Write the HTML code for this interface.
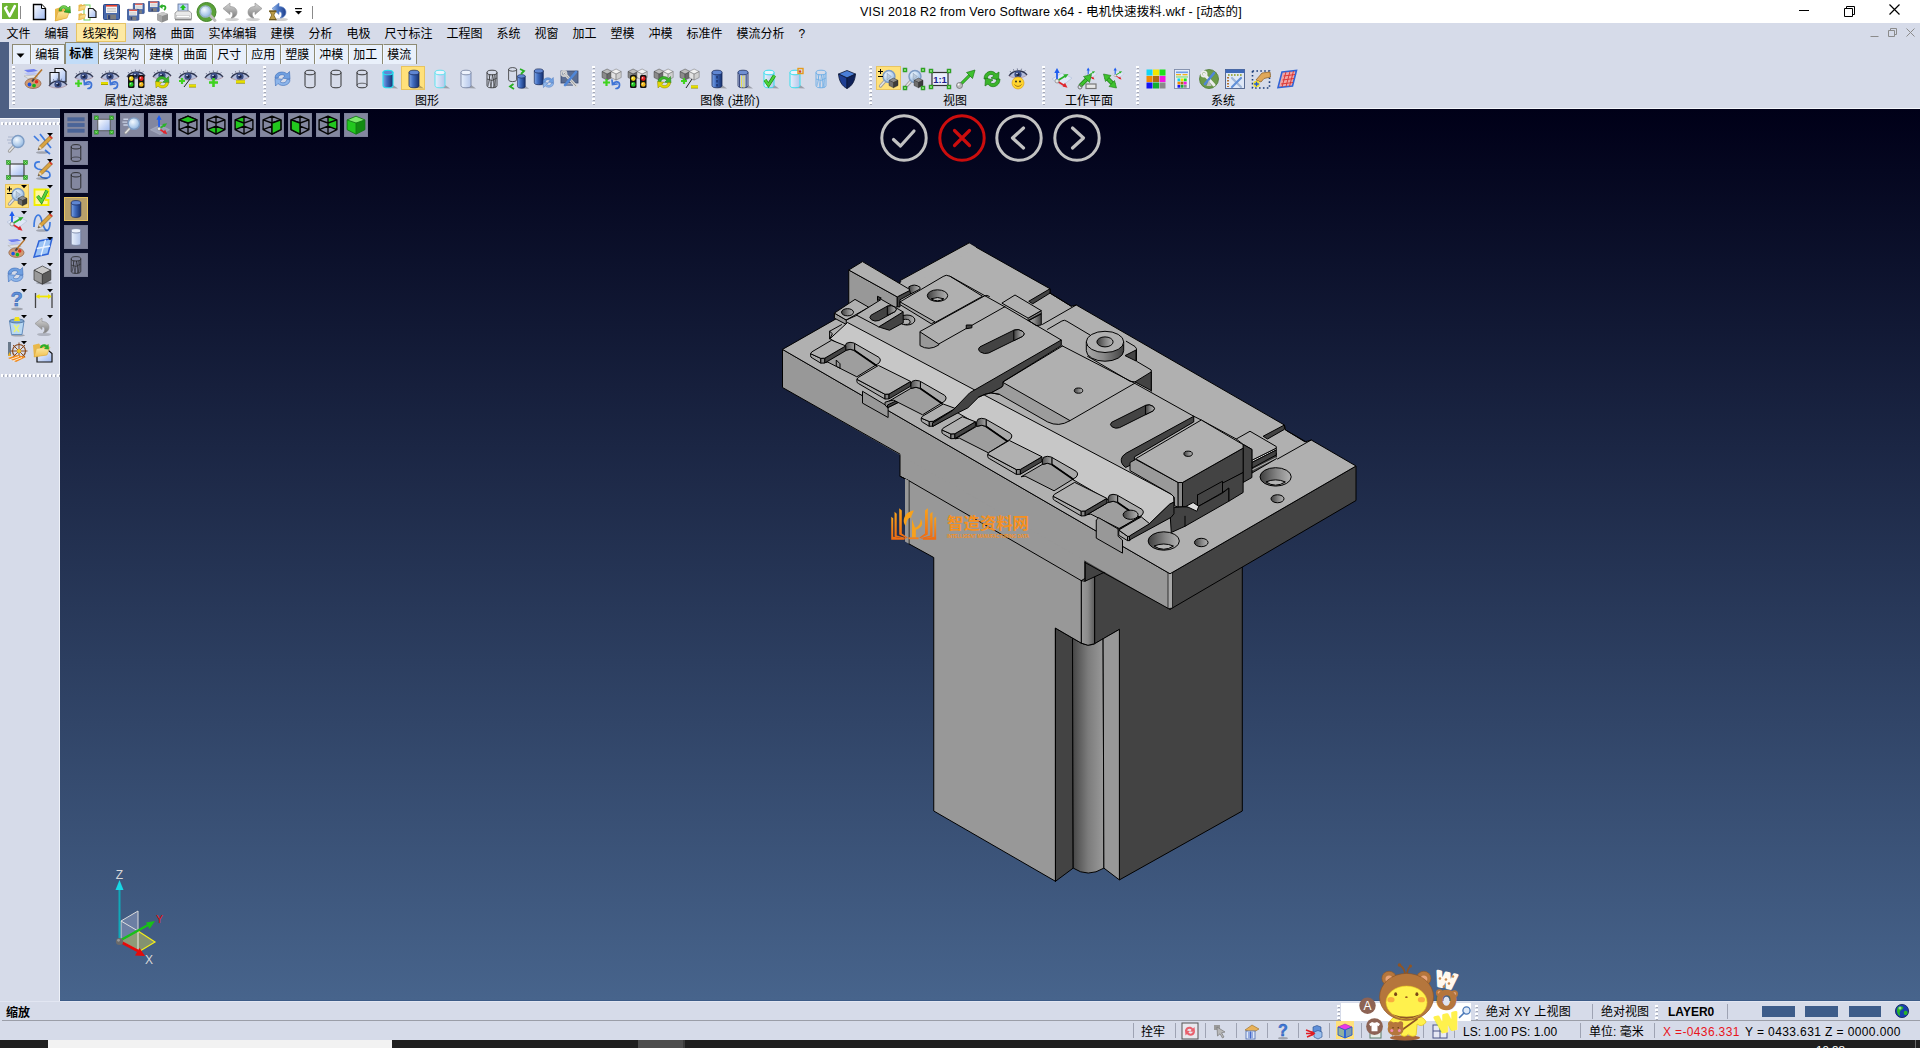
<!DOCTYPE html>
<html lang="zh-CN">
<head>
<meta charset="utf-8">
<title>VISI 2018 R2 from Vero Software x64 - 电机快速拨料.wkf - [动态的]</title>
<style>
*{box-sizing:border-box;margin:0;padding:0}
html,body{width:1920px;height:1048px;overflow:hidden;background:#d6dbe9}
body{font-family:"Liberation Sans","Noto Sans CJK SC",sans-serif;font-size:12px;color:#000;position:relative}
.abs{position:absolute}
#titlebar{position:absolute;left:0;top:0;width:1920px;height:23px;background:#fff}
#title{position:absolute;left:860px;top:4px;width:382px;height:16px;line-height:16px;font-size:12.5px;white-space:nowrap;color:#000;letter-spacing:0.17px}
#menubar{position:absolute;left:0;top:23px;width:1920px;height:20px;background:#d6dbe9}
.mi{position:absolute;top:0;height:19px;line-height:19px;font-size:12px;white-space:nowrap;color:#000}
.mi.sel{background:#fde9a4;border:1px solid #e5c365;}
#tabs{position:absolute;left:0;top:42px;width:1920px;height:22px}
.tab{position:absolute;top:2px;height:20px;line-height:20px;font-size:12px;text-align:center;text-indent:-1.5px;background:#e9f0fb;border:1px solid #8d8a73;border-bottom:none;border-right:1px solid #8d8a73;border-left:1px solid #f4f8fe;color:#000;white-space:nowrap}
.tab.sel{top:0;height:22px;line-height:22px;background:#c1dcf8;font-weight:bold;border-left:1px solid #8d8a73}
#ribbon{position:absolute;left:9px;top:64px;width:1911px;height:45px;background:#d6dbe9;border-bottom:1px solid #f4f6fb}
.grip-v{position:absolute;width:3px;background-image:repeating-linear-gradient(to bottom,#fff 0,#fff 2px,transparent 2px,transparent 4px);}
.grip-v:after{content:"";position:absolute;left:1px;top:1px;width:2px;height:100%;background-image:repeating-linear-gradient(to bottom,#9aa 0,#9aa 0,transparent 0,transparent 1px,#a5a8b5 1px,#a5a8b5 2px,transparent 2px,transparent 4px)}
.glabel{position:absolute;top:94px;height:15px;line-height:15px;font-size:12px;white-space:nowrap;transform:translateX(-50%);color:#000}
.ico{position:absolute;width:24px;height:24px;overflow:visible}
.hl{position:absolute;background:#ffe17a;border:1px solid #e8c460}
#leftstrip{position:absolute;left:0;top:42px;width:9px;height:76px;background:#4d5f83}
#leftband{position:absolute;left:0;top:109px;width:60px;height:9px;background:#4d5f83}
#sidebar{position:absolute;left:0;top:118px;width:60px;height:883px;background:#d6dbe9;border-top:1px solid #f4f6fb;border-right:1px solid #eef1f8}
.grip-h{position:absolute;height:3px;background-image:repeating-linear-gradient(to right,#fff 0,#fff 2px,transparent 2px,transparent 4px)}
.grip-h:after{content:"";position:absolute;left:1px;top:1px;height:2px;width:100%;background-image:repeating-linear-gradient(to right,transparent 0,transparent 1px,#a5a8b5 1px,#a5a8b5 2px,transparent 2px,transparent 4px)}
#viewport{position:absolute;left:60px;top:109px;width:1860px;height:892px;overflow:hidden;background:linear-gradient(to bottom,#000018 0%,#47648c 100%);border-bottom:1px solid #3c5b87}
.vbtn{position:absolute;width:24px;height:24px;background:#83879f;border:1px solid #7b7f98}
.vbtn.sel{background:#b8a06a;border:1px solid #e8c460}
#status{position:absolute;left:0;top:1001px;width:1920px;height:39px;background:#d6dbe9;border-top:1px solid #e2e6f2}
#status .ln{position:absolute;left:2px;top:18px;width:1918px;height:1px;background:#9b9ea8}
.st{position:absolute;white-space:nowrap;font-size:12px;line-height:16px;height:16px;color:#000}
.sep{position:absolute;width:1px;height:15px;background:#9ea3b3}
#taskbar{position:absolute;left:0;top:1040px;width:1920px;height:8px;background:#1f1f1f;overflow:hidden}
</style>
</head>
<body>
<div id="titlebar">
<svg width="0" height="0" style="position:absolute"><defs>
<linearGradient id="gDoc" x1="0" y1="0" x2="1" y2="1"><stop offset="0" stop-color="#fff"/><stop offset="1" stop-color="#9db8f0"/></linearGradient>
<linearGradient id="gFold" x1="0" y1="0" x2="0" y2="1"><stop offset="0" stop-color="#fbe9a8"/><stop offset="1" stop-color="#f2c14e"/></linearGradient>
<linearGradient id="gBlue" x1="0" y1="0" x2="1" y2="0"><stop offset="0" stop-color="#9dbbe8"/><stop offset="0.45" stop-color="#4a76c4"/><stop offset="1" stop-color="#1e3f8c"/></linearGradient>
<linearGradient id="gCyl" x1="0" y1="0" x2="1" y2="0"><stop offset="0" stop-color="#7fa6e6"/><stop offset="0.4" stop-color="#3f6cc0"/><stop offset="1" stop-color="#16306e"/></linearGradient>
<linearGradient id="gCylL" x1="0" y1="0" x2="1" y2="0"><stop offset="0" stop-color="#e8f0fc"/><stop offset="1" stop-color="#b4c6ea"/></linearGradient>
<linearGradient id="gGrey" x1="0" y1="0" x2="0" y2="1"><stop offset="0" stop-color="#d8d8d8"/><stop offset="1" stop-color="#7c7c7c"/></linearGradient>
<linearGradient id="gGreen" x1="0" y1="0" x2="0" y2="1"><stop offset="0" stop-color="#8be05a"/><stop offset="1" stop-color="#1f9a1a"/></linearGradient>
<radialGradient id="gLens" cx="0.4" cy="0.35" r="0.7"><stop offset="0" stop-color="#f4faff"/><stop offset="1" stop-color="#8db4e0"/></radialGradient>
<linearGradient id="gEye" x1="0" y1="0" x2="0" y2="1"><stop offset="0" stop-color="#3d4c78"/><stop offset="1" stop-color="#a9b7dc"/></linearGradient>
</defs></svg>
<svg class="abs" style="left:2px;top:3px" width="17" height="17" viewBox="0 0 17 17"><rect x="0" y="0" width="16" height="16" fill="#6db533"/><path d="M3.2 5.2 L7.6 13.2 L12.8 3.2" fill="none" stroke="#fff" stroke-width="2.6" stroke-linejoin="round" stroke-linecap="round"/><circle cx="4.6" cy="3.8" r="1.1" fill="#fff"/></svg>
<div class="abs" style="left:20px;top:6px;width:1px;height:13px;background:#8a8a8a"></div>
<svg class="abs" style="left:32px;top:3px" width="16" height="18" viewBox="0 0 16 18"><path d="M1.5 1.5 H9.5 L13.5 5.5 V16.5 H1.5 Z" fill="url(#gDoc)" stroke="#000" stroke-width="1.4"/><path d="M9.5 1.5 V5.5 H13.5" fill="#fff" stroke="#000" stroke-width="1"/></svg>
<svg class="abs" style="left:54px;top:2px" width="20" height="20" viewBox="0 0 20 20"><g transform="translate(0,1) scale(1)"><path d="M1 6 L7 4 L8 6 L14 5 L13 15 L1 18 Z" fill="#e9b84a"/><path d="M1 18 L4 9 L16 7 L13 15 Z" fill="url(#gFold)" stroke="#d9a53a" stroke-width="0.6"/></g><path d="M5 9 C5 3 12 2 14 6 L16 4 L16.5 11 L10 10 L12 8 C10 5 7 6 7.5 9 Z" fill="url(#gGreen)" stroke="#1d7d16" stroke-width="0.5"/></svg>
<svg class="abs" style="left:78px;top:2px" width="20" height="20" viewBox="0 0 20 20"><rect x="6" y="3" width="6" height="15" fill="none" stroke="#6fd05a" stroke-width="1"/><g transform="translate(0,0) scale(0.5)"><path d="M1 6 L7 4 L8 6 L14 5 L13 15 L1 18 Z" fill="#e9b84a"/><path d="M1 18 L4 9 L16 7 L13 15 Z" fill="url(#gFold)" stroke="#d9a53a" stroke-width="0.6"/></g><g transform="translate(0,9) scale(0.5)"><path d="M1 6 L7 4 L8 6 L14 5 L13 15 L1 18 Z" fill="#e9b84a"/><path d="M1 18 L4 9 L16 7 L13 15 Z" fill="url(#gFold)" stroke="#d9a53a" stroke-width="0.6"/></g><path d="M10.5 6.5 H15 L18 9.5 V15.5 H10.5 Z" fill="url(#gDoc)" stroke="#222" stroke-width="1.2"/></svg>
<svg class="abs" style="left:103px;top:4px" width="18" height="17" viewBox="0 0 18 17"><g transform="translate(0,0) scale(1)"><rect x="0.5" y="0.5" width="16" height="15" rx="1" fill="#4668ac" stroke="#2c4784" stroke-width="1"/><rect x="3" y="1" width="11" height="8" fill="#f3f3f3"/><rect x="3" y="1" width="11" height="1.6" fill="#e2402f"/><path d="M4 4.5 H13 M4 6 H13 M4 7.5 H13" stroke="#b8b8b8" stroke-width="0.7"/><rect x="4" y="10.5" width="9" height="5" fill="#7d7d7d"/><rect x="5" y="11.2" width="2.2" height="3.8" fill="#2b3f77"/></g></svg>
<svg class="abs" style="left:127px;top:3px" width="19" height="19" viewBox="0 0 19 19"><g transform="translate(6,0) scale(0.68)"><rect x="0.5" y="0.5" width="16" height="15" rx="1" fill="#4668ac" stroke="#2c4784" stroke-width="1"/><rect x="3" y="1" width="11" height="8" fill="#f3f3f3"/><rect x="3" y="1" width="11" height="1.6" fill="#e2402f"/><path d="M4 4.5 H13 M4 6 H13 M4 7.5 H13" stroke="#b8b8b8" stroke-width="0.7"/><rect x="4" y="10.5" width="9" height="5" fill="#7d7d7d"/><rect x="5" y="11.2" width="2.2" height="3.8" fill="#2b3f77"/></g><g transform="translate(0,6) scale(0.72)"><rect x="0.5" y="0.5" width="16" height="15" rx="1" fill="#4668ac" stroke="#2c4784" stroke-width="1"/><rect x="3" y="1" width="11" height="8" fill="#f3f3f3"/><rect x="3" y="1" width="11" height="1.6" fill="#e2402f"/><path d="M4 4.5 H13 M4 6 H13 M4 7.5 H13" stroke="#b8b8b8" stroke-width="0.7"/><rect x="4" y="10.5" width="9" height="5" fill="#7d7d7d"/><rect x="5" y="11.2" width="2.2" height="3.8" fill="#2b3f77"/></g></svg>
<svg class="abs" style="left:148px;top:1px" width="22" height="22" viewBox="0 0 22 22"><g transform="translate(0,0) scale(0.68)"><rect x="0.5" y="0.5" width="16" height="15" rx="1" fill="#4668ac" stroke="#2c4784" stroke-width="1"/><rect x="3" y="1" width="11" height="8" fill="#f3f3f3"/><rect x="3" y="1" width="11" height="1.6" fill="#e2402f"/><path d="M4 4.5 H13 M4 6 H13 M4 7.5 H13" stroke="#b8b8b8" stroke-width="0.7"/><rect x="4" y="10.5" width="9" height="5" fill="#7d7d7d"/><rect x="5" y="11.2" width="2.2" height="3.8" fill="#2b3f77"/></g><path d="M13 6 C17 3 19 7 16 9" fill="none" stroke="#2cae2a" stroke-width="1.8"/><path d="M11 5.5 L14.5 3 L14.5 8 Z" fill="#2cae2a"/><path d="M9 13 L15 11 L20 13 L20 19 L14 21.5 L9 19 Z" fill="#8d8d8d"/><path d="M9 13 L14 15 L20 13 L15 11 Z" fill="#c9c9c9"/><path d="M14 15 V21.5 L9 19 V13 Z" fill="#a6a6a6"/></svg>
<svg class="abs" style="left:174px;top:2px" width="20" height="20" viewBox="0 0 20 20"><rect x="4" y="2" width="10" height="9" fill="#b9d1f6" stroke="#5d6f96" stroke-width="0.8"/><path d="M9 2.5 L12 6 H10.3 V8 H7.7 V6 H6 Z" fill="#25c01f"/><path d="M1 11 L3.5 9 H15 L17.5 11 V17 H1 Z" fill="#e9e9e9" stroke="#8c8c8c" stroke-width="0.8"/><rect x="2.5" y="13.5" width="13" height="2" fill="#fff" stroke="#aaa" stroke-width="0.4"/><rect x="1" y="17" width="16.5" height="1.4" fill="#8a8a8a"/></svg>
<svg class="abs" style="left:196px;top:1px" width="22" height="22" viewBox="0 0 22 22"><circle cx="10.5" cy="11" r="9.5" fill="#5aa138"/><circle cx="10.5" cy="11" r="9.5" fill="none" stroke="#44852a" stroke-width="1"/><path d="M13 13 L19 19.5" stroke="#bdbdbd" stroke-width="3" stroke-linecap="round"/><circle cx="9.5" cy="10.5" r="5.6" fill="url(#gLens)" stroke="#9ab4c9" stroke-width="1.4"/></svg>
<svg class="abs" style="left:222px;top:2px" width="20" height="20" viewBox="0 0 20 20"><g transform="translate(0,0)"><ellipse cx="10" cy="17.5" rx="7" ry="1.6" fill="#000" opacity="0.18"/><path d="M1 6.5 L8 1 V4.5 C14 4.5 16 9 14.5 12.5 C13.5 15 11 16 9 16 C11.5 14 11.5 9.5 8 9.5 V12.5 Z" fill="url(#gGrey)" stroke="#8f8f8f" stroke-width="0.6"/></g></svg>
<svg class="abs" style="left:245px;top:2px" width="20" height="20" viewBox="0 0 20 20"><g transform="translate(0,0) translate(18,0) scale(-1,1)"><ellipse cx="10" cy="17.5" rx="7" ry="1.6" fill="#000" opacity="0.18"/><path d="M1 6.5 L8 1 V4.5 C14 4.5 16 9 14.5 12.5 C13.5 15 11 16 9 16 C11.5 14 11.5 9.5 8 9.5 V12.5 Z" fill="url(#gGrey)" stroke="#8f8f8f" stroke-width="0.6"/></g></svg>
<svg class="abs" style="left:268px;top:2px" width="22" height="20" viewBox="0 0 22 20"><g transform="translate(3,0)"><ellipse cx="10" cy="17.5" rx="7" ry="1.6" fill="#000" opacity="0.18"/><path d="M1 6.5 L8 1 V4.5 C14 4.5 16 9 14.5 12.5 C13.5 15 11 16 9 16 C11.5 14 11.5 9.5 8 9.5 V12.5 Z" fill="url(#gBlue)" stroke="#5a80c4" stroke-width="0.6"/></g><path d="M1.5 9 H8 L5.8 13 L8 17.5 H1.5 L3.7 13 Z" fill="#b99a45" stroke="#7a6320" stroke-width="0.8"/><rect x="1" y="8.5" width="7.5" height="1.3" fill="#6e5a1f"/><rect x="1" y="17" width="7.5" height="1.3" fill="#6e5a1f"/></svg>
<svg class="abs" style="left:294px;top:7px" width="10" height="10" viewBox="0 0 10 10"><rect x="1" y="1" width="7" height="1.2" fill="#000"/><path d="M1 4 H8 L4.5 7.5 Z" fill="#000"/></svg>
<div class="abs" style="left:312px;top:6px;width:1px;height:13px;background:#8a8a8a"></div>
<div id="title">VISI 2018 R2 from Vero Software x64 - 电机快速拨料.wkf - [动态的]</div>
<svg class="abs" style="left:1795px;top:1px" width="120" height="20" viewBox="0 0 120 20"><path d="M4 9.5 H14" stroke="#000" stroke-width="1"/><path d="M49.5 7.5 H57.5 V15.5 H49.5 Z M51.5 7.5 V5.5 H59.5 V13.5 H57.5" fill="none" stroke="#000" stroke-width="1"/><path d="M94.5 3.5 L104.5 13.5 M104.5 3.5 L94.5 13.5" stroke="#000" stroke-width="1.2"/></svg>
</div>
<div id="menubar">
<div class="mi" style="left:6.5px;top:2px">文件</div>
<div class="mi" style="left:44.5px;top:2px">编辑</div>
<div class="mi sel" style="left:76px;width:50px;top:0;height:19px;line-height:21px;padding-left:5.5px">线架构</div>
<div class="mi" style="left:132.5px;top:2px">网格</div>
<div class="mi" style="left:170.5px;top:2px">曲面</div>
<div class="mi" style="left:208.5px;top:2px">实体编辑</div>
<div class="mi" style="left:270.5px;top:2px">建模</div>
<div class="mi" style="left:308.5px;top:2px">分析</div>
<div class="mi" style="left:346.5px;top:2px">电极</div>
<div class="mi" style="left:384.5px;top:2px">尺寸标注</div>
<div class="mi" style="left:446.5px;top:2px">工程图</div>
<div class="mi" style="left:496.5px;top:2px">系统</div>
<div class="mi" style="left:534.5px;top:2px">视窗</div>
<div class="mi" style="left:572.5px;top:2px">加工</div>
<div class="mi" style="left:610.5px;top:2px">塑模</div>
<div class="mi" style="left:648.5px;top:2px">冲模</div>
<div class="mi" style="left:686.5px;top:2px">标准件</div>
<div class="mi" style="left:736.5px;top:2px">模流分析</div>
<div class="mi" style="left:798.5px;top:2px">?</div>
<svg class="abs" style="left:1866px;top:3px" width="50" height="14" viewBox="0 0 50 14"><path d="M4.5 10.5 H12.5" stroke="#8b8b8b" stroke-width="1"/><path d="M22.5 4.5 H28.5 V10.5 H22.5 Z M24.5 4.5 V2.5 H30.5 V8.5 H28.5" fill="none" stroke="#8b8b8b" stroke-width="1"/><path d="M40.5 2.5 L48.5 10.5 M48.5 2.5 L40.5 10.5" stroke="#8b8b8b" stroke-width="1"/></svg>
</div>
<div id="leftstrip"></div><div id="leftband"></div>
<div id="tabs">
<div class="tab" style="left:12px;width:19px;border-left:1px solid #8d8a73"><svg width="10" height="6" viewBox="0 0 10 6" style="position:absolute;left:3px;top:8px"><path d="M0.5 0.5 H8.5 L4.5 4.8 Z" fill="#000"/></svg></div>
<div class="tab" style="left:31px;width:34px">编辑</div>
<div class="tab sel" style="left:65px;width:34px">标准</div>
<div class="tab" style="left:99px;width:46px">线架构</div>
<div class="tab" style="left:145px;width:34px">建模</div>
<div class="tab" style="left:179px;width:34px">曲面</div>
<div class="tab" style="left:213px;width:34px">尺寸</div>
<div class="tab" style="left:247px;width:34px">应用</div>
<div class="tab" style="left:281px;width:34px">塑膜</div>
<div class="tab" style="left:315px;width:34px">冲模</div>
<div class="tab" style="left:349px;width:34px">加工</div>
<div class="tab" style="left:383px;width:34px">模流</div>
</div>
<div id="ribbon"></div>
<div class="grip-v" style="left:12px;top:66px;height:40px"></div>
<div class="grip-v" style="left:263px;top:66px;height:40px"></div>
<div class="grip-v" style="left:592px;top:66px;height:40px"></div>
<div class="grip-v" style="left:869px;top:66px;height:40px"></div>
<div class="grip-v" style="left:1042px;top:66px;height:40px"></div>
<div class="grip-v" style="left:1136px;top:66px;height:40px"></div>
<div class="glabel" style="left:136px">属性/过滤器</div>
<div class="glabel" style="left:427px">图形</div>
<div class="glabel" style="left:730px">图像 (进阶)</div>
<div class="glabel" style="left:955px">视图</div>
<div class="glabel" style="left:1089px">工作平面</div>
<div class="glabel" style="left:1223px">系统</div>
<div class="hl" style="left:401px;top:66px;width:24px;height:24px"></div>
<div class="hl" style="left:876px;top:66px;width:25px;height:24px"></div>
<svg class="ico" style="left:21px;top:67px" viewBox="0 0 24 24"><path d="M3 3 L13 2 L17 4 L7 5.5 Z" fill="#6f7ff0"/><path d="M3 6 L13 5 L17 7 L7 8.5 Z" fill="#b9c3f5"/><path d="M3 9 L13 8 L17 10 L7 11.5 Z" fill="#e4e4e4" stroke="#999" stroke-width="0.4"/><ellipse cx="12" cy="16.5" rx="8" ry="5" fill="#d09a72" stroke="#8a5a3c" stroke-width="0.7"/><circle cx="8.5" cy="17.5" r="1.9" fill="#1b53e6"/><circle cx="13" cy="18.6" r="1.9" fill="#16b61c"/><circle cx="15.5" cy="14.8" r="1.8" fill="#e02a1e"/><path d="M12 13 L21 2.5" stroke="#b5742b" stroke-width="1.6"/><path d="M11 14.5 L13 12" stroke="#444" stroke-width="2"/></svg>
<svg class="ico" style="left:46px;top:67px" viewBox="0 0 24 24"><path d="M9 1.5 H17 L20 4.5 V15 H9 Z" fill="url(#gDoc)" stroke="#111" stroke-width="1.1"/><path d="M4 5.5 H13 V17 H4 Z" fill="url(#gDoc)" stroke="#111" stroke-width="1.1"/><g transform="translate(2,11) scale(1.0)"><path d="M1 8 C5 1.5 15 1.5 19 7 C15 10.5 6 11 1 8 Z" fill="#b4bedc"/><path d="M1 8 C5 1.5 15 1.5 19 7" fill="none" stroke="#2d3550" stroke-width="1.3"/><path d="M3 4.5 L2 3 M6 2.8 L5.4 1.2 M9.5 2 L9.3 0.4 M13 2.2 L13.6 0.7 M16.2 3.6 L17.4 2.3" stroke="#3a4263" stroke-width="0.6"/><circle cx="10" cy="6.5" r="3.6" fill="#3c4f86"/><circle cx="10" cy="6.5" r="1.6" fill="#1a2240"/><circle cx="9" cy="5.5" r="0.8" fill="#dfe8ff"/><path d="M1 8 C6 11 15 10.5 19 7" fill="none" stroke="#b08f98" stroke-width="0.7"/></g></svg>
<svg class="ico" style="left:72px;top:67px" viewBox="0 0 24 24"><g transform="translate(2,3) scale(1)"><path d="M1 8 C5 1.5 15 1.5 19 7 C15 10.5 6 11 1 8 Z" fill="#b4bedc"/><path d="M1 8 C5 1.5 15 1.5 19 7" fill="none" stroke="#2d3550" stroke-width="1.3"/><path d="M3 4.5 L2 3 M6 2.8 L5.4 1.2 M9.5 2 L9.3 0.4 M13 2.2 L13.6 0.7 M16.2 3.6 L17.4 2.3" stroke="#3a4263" stroke-width="0.6"/><circle cx="10" cy="6.5" r="3.6" fill="#3c4f86"/><circle cx="10" cy="6.5" r="1.6" fill="#1a2240"/><circle cx="9" cy="5.5" r="0.8" fill="#dfe8ff"/><path d="M1 8 C6 11 15 10.5 19 7" fill="none" stroke="#b08f98" stroke-width="0.7"/></g><path d="M3 16.5 H10 M6.5 13 V20" stroke="#3fd21f" stroke-width="2.2"/><g transform="translate(11,12)"><path d="M1 1 L1.5 5.5 L6 5 M1.8 5 C4 1.5 9 2.5 8.5 6.5 C8.2 8.5 6.5 9.5 5 9.5" fill="none" stroke="#3f74d6" stroke-width="1.7" stroke-linecap="round"/></g></svg>
<svg class="ico" style="left:98px;top:67px" viewBox="0 0 24 24"><g transform="translate(2,3) scale(1)"><path d="M1 8 C5 1.5 15 1.5 19 7 C15 10.5 6 11 1 8 Z" fill="#b4bedc"/><path d="M1 8 C5 1.5 15 1.5 19 7" fill="none" stroke="#2d3550" stroke-width="1.3"/><path d="M3 4.5 L2 3 M6 2.8 L5.4 1.2 M9.5 2 L9.3 0.4 M13 2.2 L13.6 0.7 M16.2 3.6 L17.4 2.3" stroke="#3a4263" stroke-width="0.6"/><circle cx="10" cy="6.5" r="3.6" fill="#3c4f86"/><circle cx="10" cy="6.5" r="1.6" fill="#1a2240"/><circle cx="9" cy="5.5" r="0.8" fill="#dfe8ff"/><path d="M1 8 C6 11 15 10.5 19 7" fill="none" stroke="#b08f98" stroke-width="0.7"/></g><path d="M3 16.5 H10" stroke="#8f8a00" stroke-width="3.0"/><path d="M3 16.2 H10" stroke="#e8e000" stroke-width="2.2"/><g transform="translate(11,12)"><path d="M1 1 L1.5 5.5 L6 5 M1.8 5 C4 1.5 9 2.5 8.5 6.5 C8.2 8.5 6.5 9.5 5 9.5" fill="none" stroke="#3f74d6" stroke-width="1.7" stroke-linecap="round"/></g></svg>
<svg class="ico" style="left:124px;top:67px" viewBox="0 0 24 24"><g transform="translate(2,2) scale(1)"><path d="M1 8 C5 1.5 15 1.5 19 7 C15 10.5 6 11 1 8 Z" fill="#b4bedc"/><path d="M1 8 C5 1.5 15 1.5 19 7" fill="none" stroke="#2d3550" stroke-width="1.3"/><path d="M3 4.5 L2 3 M6 2.8 L5.4 1.2 M9.5 2 L9.3 0.4 M13 2.2 L13.6 0.7 M16.2 3.6 L17.4 2.3" stroke="#3a4263" stroke-width="0.6"/><circle cx="10" cy="6.5" r="3.6" fill="#3c4f86"/><circle cx="10" cy="6.5" r="1.6" fill="#1a2240"/><circle cx="9" cy="5.5" r="0.8" fill="#dfe8ff"/><path d="M1 8 C6 11 15 10.5 19 7" fill="none" stroke="#b08f98" stroke-width="0.7"/></g><g transform="translate(4,8)"><rect x="0" y="0" width="6.5" height="13" rx="1.5" fill="#111"/><circle cx="3.25" cy="3.6" r="2.3" fill="#f2d21a"/><circle cx="3.25" cy="9.4" r="2.3" fill="#1fc41f"/><circle cx="2.6" cy="2.9" r="0.8" fill="#fff" opacity="0.7"/><circle cx="2.6" cy="8.7" r="0.8" fill="#fff" opacity="0.7"/></g><g transform="translate(14,8)"><rect x="0" y="0" width="6.5" height="13" rx="1.5" fill="#111"/><circle cx="3.25" cy="3.6" r="2.3" fill="#e21c1c"/><circle cx="3.25" cy="9.4" r="2.3" fill="#f2b81a"/><circle cx="2.6" cy="2.9" r="0.8" fill="#fff" opacity="0.7"/><circle cx="2.6" cy="8.7" r="0.8" fill="#fff" opacity="0.7"/></g></svg>
<svg class="ico" style="left:150px;top:67px" viewBox="0 0 24 24"><g transform="translate(2,2) scale(1)"><path d="M1 8 C5 1.5 15 1.5 19 7 C15 10.5 6 11 1 8 Z" fill="#b4bedc"/><path d="M1 8 C5 1.5 15 1.5 19 7" fill="none" stroke="#2d3550" stroke-width="1.3"/><path d="M3 4.5 L2 3 M6 2.8 L5.4 1.2 M9.5 2 L9.3 0.4 M13 2.2 L13.6 0.7 M16.2 3.6 L17.4 2.3" stroke="#3a4263" stroke-width="0.6"/><circle cx="10" cy="6.5" r="3.6" fill="#3c4f86"/><circle cx="10" cy="6.5" r="1.6" fill="#1a2240"/><circle cx="9" cy="5.5" r="0.8" fill="#dfe8ff"/><path d="M1 8 C6 11 15 10.5 19 7" fill="none" stroke="#b08f98" stroke-width="0.7"/></g><g transform="translate(4,7) scale(1.0)"><path d="M2 8 C2 2 10 1 12.5 4.5 L14.5 2.5 L15 9 L8.5 8.3 L10.8 6.3 C9 4 5 4.5 4.8 8 Z" fill="#3cb52a" stroke="#1c7a16" stroke-width="0.5"/><path d="M14.5 8.5 C14.5 14.5 6.5 15.5 4 12 L2 14 L1.5 7.5 L8 8.2 L5.7 10.2 C7.5 12.5 11.5 12 11.7 8.5 Z" fill="#e2d800" stroke="#8c8600" stroke-width="0.5"/></g></svg>
<svg class="ico" style="left:176px;top:67px" viewBox="0 0 24 24"><g transform="translate(2,3) scale(1)"><path d="M1 8 C5 1.5 15 1.5 19 7 C15 10.5 6 11 1 8 Z" fill="#b4bedc"/><path d="M1 8 C5 1.5 15 1.5 19 7" fill="none" stroke="#2d3550" stroke-width="1.3"/><path d="M3 4.5 L2 3 M6 2.8 L5.4 1.2 M9.5 2 L9.3 0.4 M13 2.2 L13.6 0.7 M16.2 3.6 L17.4 2.3" stroke="#3a4263" stroke-width="0.6"/><circle cx="10" cy="6.5" r="3.6" fill="#3c4f86"/><circle cx="10" cy="6.5" r="1.6" fill="#1a2240"/><circle cx="9" cy="5.5" r="0.8" fill="#dfe8ff"/><path d="M1 8 C6 11 15 10.5 19 7" fill="none" stroke="#b08f98" stroke-width="0.7"/></g><path d="M3 14.0 H9 M6.0 11 V17" stroke="#3fd21f" stroke-width="2.2"/><path d="M8 20 L14 12" stroke="#222" stroke-width="1"/><path d="M13 19 H20" stroke="#8f8a00" stroke-width="3.0"/><path d="M13 18.7 H20" stroke="#e8e000" stroke-width="2.2"/></svg>
<svg class="ico" style="left:202px;top:67px" viewBox="0 0 24 24"><g transform="translate(2,3) scale(1)"><path d="M1 8 C5 1.5 15 1.5 19 7 C15 10.5 6 11 1 8 Z" fill="#b4bedc"/><path d="M1 8 C5 1.5 15 1.5 19 7" fill="none" stroke="#2d3550" stroke-width="1.3"/><path d="M3 4.5 L2 3 M6 2.8 L5.4 1.2 M9.5 2 L9.3 0.4 M13 2.2 L13.6 0.7 M16.2 3.6 L17.4 2.3" stroke="#3a4263" stroke-width="0.6"/><circle cx="10" cy="6.5" r="3.6" fill="#3c4f86"/><circle cx="10" cy="6.5" r="1.6" fill="#1a2240"/><circle cx="9" cy="5.5" r="0.8" fill="#dfe8ff"/><path d="M1 8 C6 11 15 10.5 19 7" fill="none" stroke="#b08f98" stroke-width="0.7"/></g><path d="M7 15.5 H16 M11.5 11 V20" stroke="#3fd21f" stroke-width="2.6"/></svg>
<svg class="ico" style="left:228px;top:67px" viewBox="0 0 24 24"><g transform="translate(2,3) scale(1)"><path d="M1 8 C5 1.5 15 1.5 19 7 C15 10.5 6 11 1 8 Z" fill="#b4bedc"/><path d="M1 8 C5 1.5 15 1.5 19 7" fill="none" stroke="#2d3550" stroke-width="1.3"/><path d="M3 4.5 L2 3 M6 2.8 L5.4 1.2 M9.5 2 L9.3 0.4 M13 2.2 L13.6 0.7 M16.2 3.6 L17.4 2.3" stroke="#3a4263" stroke-width="0.6"/><circle cx="10" cy="6.5" r="3.6" fill="#3c4f86"/><circle cx="10" cy="6.5" r="1.6" fill="#1a2240"/><circle cx="9" cy="5.5" r="0.8" fill="#dfe8ff"/><path d="M1 8 C6 11 15 10.5 19 7" fill="none" stroke="#b08f98" stroke-width="0.7"/></g><path d="M8 15 H17" stroke="#8f8a00" stroke-width="3.2"/><path d="M8 14.7 H17" stroke="#e8e000" stroke-width="2.4"/></svg>
<svg class="ico" style="left:271px;top:67px" viewBox="0 0 24 24"><g transform="translate(1,1) scale(1.0)"><path d="M3 10 C3 3.5 12 2.5 15 6 L17.5 3.5 L18 11 L10.5 10.2 L13 8 C11 5.8 6.5 6.3 6.2 10 Z" fill="#6f9fe0" stroke="#3c6db8" stroke-width="0.6"/><path d="M18 11.5 C18 18 9 19 6 15.5 L3.5 18 L3 10.5 L10.5 11.3 L8 13.5 C10 15.7 14.5 15.2 14.8 11.5 Z" fill="#8db5ea" stroke="#3c6db8" stroke-width="0.6"/></g></svg>
<svg class="ico" style="left:298px;top:67px" viewBox="0 0 24 24"><path d="M7 5.5 V18.5 A5 2.3 0 0 0 17 18.5 V5.5" fill="none" stroke="#222" stroke-width="0.9"/><ellipse cx="12" cy="5.5" rx="5" ry="2.3" fill="none" stroke="#222" stroke-width="0.9"/></svg>
<svg class="ico" style="left:324px;top:67px" viewBox="0 0 24 24"><path d="M7 5.5 V18.5 A5 2.3 0 0 0 17 18.5 V5.5" fill="none" stroke="#222" stroke-width="0.9"/><ellipse cx="12" cy="5.5" rx="5" ry="2.3" fill="none" stroke="#222" stroke-width="0.9"/></svg>
<svg class="ico" style="left:350px;top:67px" viewBox="0 0 24 24"><path d="M7 5.5 V18.5 A5 2.3 0 0 0 17 18.5 V5.5" fill="none" stroke="#222" stroke-width="0.9"/><ellipse cx="12" cy="5.5" rx="5" ry="2.3" fill="none" stroke="#222" stroke-width="0.9"/><path d="M7 18.5 A5 2.3 0 0 1 17 18.5" fill="none" stroke="#222" stroke-width="0.63"/></svg>
<svg class="ico" style="left:376px;top:67px" viewBox="0 0 24 24"><path d="M11 21 L22 21.6 L17 18 Z" fill="#000" opacity="0.28"/><path d="M7 5.5 V18.5 A5 2.3 0 0 0 17 18.5 V5.5 Z" fill="url(#gCyl)" stroke="#24e0f0" stroke-width="1.1"/><ellipse cx="12" cy="5.5" rx="5" ry="2.3" fill="#5f86d2" stroke="#24e0f0" stroke-width="1.1"/></svg>
<svg class="ico" style="left:402px;top:67px" viewBox="0 0 24 24"><path d="M11 21 L22 21.6 L17 18 Z" fill="#000" opacity="0.28"/><path d="M7 5.5 V18.5 A5 2.3 0 0 0 17 18.5 V5.5 Z" fill="url(#gCyl)" stroke="#1b2c5c" stroke-width="0.8"/><ellipse cx="12" cy="5.5" rx="5" ry="2.3" fill="#5f86d2" stroke="#1b2c5c" stroke-width="0.8"/></svg>
<svg class="ico" style="left:428px;top:67px" viewBox="0 0 24 24"><path d="M11 21 L22 21.6 L17 18 Z" fill="#000" opacity="0.28"/><path d="M7 5.5 V18.5 A5 2.3 0 0 0 17 18.5 V5.5 Z" fill="url(#gCylL)" stroke="#4fe2ee" stroke-width="0.9"/><ellipse cx="12" cy="5.5" rx="5" ry="2.3" fill="#eef3fd" stroke="#4fe2ee" stroke-width="0.9"/></svg>
<svg class="ico" style="left:454px;top:67px" viewBox="0 0 24 24"><path d="M11 21 L22 21.6 L17 18 Z" fill="#000" opacity="0.28"/><path d="M7 5.5 V18.5 A5 2.3 0 0 0 17 18.5 V5.5 Z" fill="url(#gCylL)" stroke="#6f7c9c" stroke-width="0.8"/><ellipse cx="12" cy="5.5" rx="5" ry="2.3" fill="#eef3fd" stroke="#6f7c9c" stroke-width="0.8"/></svg>
<svg class="ico" style="left:480px;top:67px" viewBox="0 0 24 24"><path d="M7 5.5 V18.5 A5 2.3 0 0 0 17 18.5 V5.5" fill="none" stroke="#222" stroke-width="0.8"/><ellipse cx="12" cy="5.5" rx="5" ry="2.3" fill="none" stroke="#222" stroke-width="0.8"/><path d="M9 7.5 L11 20.5 L12.5 7.8 L15 20.3 L16 7 M8 19 L10 7.6 M13.5 20.6 L14.5 7.6 M7 12 L12 13.5 L17 11" fill="none" stroke="#222" stroke-width="0.6"/></svg>
<svg class="ico" style="left:506px;top:67px" viewBox="0 0 24 24"><g transform="translate(-3,-2) scale(0.8)"><path d="M7 5.5 V18.5 A5 2.3 0 0 0 17 18.5 V5.5" fill="none" stroke="#222" stroke-width="0.9"/><ellipse cx="12" cy="5.5" rx="5" ry="2.3" fill="none" stroke="#222" stroke-width="0.9"/></g><g transform="translate(6,5) scale(0.78)"><path d="M11 21 L22 21.6 L17 18 Z" fill="#000" opacity="0.28"/><path d="M7 5.5 V18.5 A5 2.3 0 0 0 17 18.5 V5.5 Z" fill="url(#gCyl)" stroke="#1b2c5c" stroke-width="0.8"/><ellipse cx="12" cy="5.5" rx="5" ry="2.3" fill="#5f86d2" stroke="#1b2c5c" stroke-width="0.8"/></g><path d="M14 2 L18 4 L15 7" fill="none" stroke="#27b022" stroke-width="1.8"/><path d="M8 22 L4 19.5 L7.5 17" fill="none" stroke="#27b022" stroke-width="1.8"/></svg>
<svg class="ico" style="left:532px;top:67px" viewBox="0 0 24 24"><g transform="translate(-4,-1) scale(0.9)"><path d="M11 21 L22 21.6 L17 18 Z" fill="#000" opacity="0.28"/><path d="M7 5.5 V18.5 A5 2.3 0 0 0 17 18.5 V5.5 Z" fill="url(#gCyl)" stroke="#1b2c5c" stroke-width="0.8"/><ellipse cx="12" cy="5.5" rx="5" ry="2.3" fill="#5f86d2" stroke="#1b2c5c" stroke-width="0.8"/></g><g transform="translate(9,8) scale(0.7)"><path d="M3 10 C3 3.5 12 2.5 15 6 L17.5 3.5 L18 11 L10.5 10.2 L13 8 C11 5.8 6.5 6.3 6.2 10 Z" fill="#6f9fe0" stroke="#3c6db8" stroke-width="0.6"/><path d="M18 11.5 C18 18 9 19 6 15.5 L3.5 18 L3 10.5 L10.5 11.3 L8 13.5 C10 15.7 14.5 15.2 14.8 11.5 Z" fill="#8db5ea" stroke="#3c6db8" stroke-width="0.6"/></g></svg>
<svg class="ico" style="left:558px;top:67px" viewBox="0 0 24 24"><rect x="3" y="4" width="17" height="12" fill="#5b6d92" stroke="#39486b" stroke-width="0.8"/><rect x="8" y="17" width="7" height="2" fill="#7c8aa8"/><path d="M6 6 L18 19" stroke="#d8d8d8" stroke-width="3" stroke-linecap="round"/><path d="M6 6 L18 19" stroke="#9a9a9a" stroke-width="1"/><path d="M18 5 L7 18" stroke="#4f86d8" stroke-width="2.6" stroke-linecap="round"/><circle cx="6" cy="6.5" r="2.6" fill="none" stroke="#cfcfcf" stroke-width="1.6"/></svg>
<svg class="ico" style="left:600px;top:67px" viewBox="0 0 24 24"><g transform="translate(2,2) scale(0.85)"><path d="M0 3 L6 0 L12 3 L6 6 Z" fill="#bdbdbd" stroke="#333" stroke-width="0.5"/><path d="M0 3 L6 6 V13 L0 10 Z" fill="#8a8a8a" stroke="#333" stroke-width="0.5"/><path d="M12 3 L6 6 V13 L12 10 Z" fill="#6a6a6a" stroke="#333" stroke-width="0.5"/></g><g transform="translate(11,2) scale(0.85)"><path d="M0 3 L6 0 L12 3 L6 6 Z" fill="#f2f2f2" stroke="#555" stroke-width="0.5"/><path d="M0 3 L6 6 V13 L0 10 Z" fill="#e2e2e2" stroke="#555" stroke-width="0.5"/><path d="M12 3 L6 6 V13 L12 10 Z" fill="#cfcfcf" stroke="#555" stroke-width="0.5"/></g><path d="M3 15.5 H10 M6.5 12 V19" stroke="#3fd21f" stroke-width="2.2"/><g transform="translate(11,12)"><path d="M1 1 L1.5 5.5 L6 5 M1.8 5 C4 1.5 9 2.5 8.5 6.5 C8.2 8.5 6.5 9.5 5 9.5" fill="none" stroke="#3f74d6" stroke-width="1.7" stroke-linecap="round"/></g></svg>
<svg class="ico" style="left:626px;top:67px" viewBox="0 0 24 24"><g transform="translate(2,2) scale(0.85)"><path d="M0 3 L6 0 L12 3 L6 6 Z" fill="#bdbdbd" stroke="#333" stroke-width="0.5"/><path d="M0 3 L6 6 V13 L0 10 Z" fill="#8a8a8a" stroke="#333" stroke-width="0.5"/><path d="M12 3 L6 6 V13 L12 10 Z" fill="#6a6a6a" stroke="#333" stroke-width="0.5"/></g><g transform="translate(11,2) scale(0.85)"><path d="M0 3 L6 0 L12 3 L6 6 Z" fill="#f2f2f2" stroke="#555" stroke-width="0.5"/><path d="M0 3 L6 6 V13 L0 10 Z" fill="#e2e2e2" stroke="#555" stroke-width="0.5"/><path d="M12 3 L6 6 V13 L12 10 Z" fill="#cfcfcf" stroke="#555" stroke-width="0.5"/></g><g transform="translate(4,8)"><rect x="0" y="0" width="6.5" height="13" rx="1.5" fill="#111"/><circle cx="3.25" cy="3.6" r="2.3" fill="#f2d21a"/><circle cx="3.25" cy="9.4" r="2.3" fill="#1fc41f"/><circle cx="2.6" cy="2.9" r="0.8" fill="#fff" opacity="0.7"/><circle cx="2.6" cy="8.7" r="0.8" fill="#fff" opacity="0.7"/></g><g transform="translate(14,8)"><rect x="0" y="0" width="6.5" height="13" rx="1.5" fill="#111"/><circle cx="3.25" cy="3.6" r="2.3" fill="#e21c1c"/><circle cx="3.25" cy="9.4" r="2.3" fill="#f2b81a"/><circle cx="2.6" cy="2.9" r="0.8" fill="#fff" opacity="0.7"/><circle cx="2.6" cy="8.7" r="0.8" fill="#fff" opacity="0.7"/></g></svg>
<svg class="ico" style="left:652px;top:67px" viewBox="0 0 24 24"><g transform="translate(2,2) scale(0.85)"><path d="M0 3 L6 0 L12 3 L6 6 Z" fill="#bdbdbd" stroke="#333" stroke-width="0.5"/><path d="M0 3 L6 6 V13 L0 10 Z" fill="#8a8a8a" stroke="#333" stroke-width="0.5"/><path d="M12 3 L6 6 V13 L12 10 Z" fill="#6a6a6a" stroke="#333" stroke-width="0.5"/></g><g transform="translate(11,2) scale(0.85)"><path d="M0 3 L6 0 L12 3 L6 6 Z" fill="#f2f2f2" stroke="#555" stroke-width="0.5"/><path d="M0 3 L6 6 V13 L0 10 Z" fill="#e2e2e2" stroke="#555" stroke-width="0.5"/><path d="M12 3 L6 6 V13 L12 10 Z" fill="#cfcfcf" stroke="#555" stroke-width="0.5"/></g><g transform="translate(4,7) scale(1)"><path d="M2 8 C2 2 10 1 12.5 4.5 L14.5 2.5 L15 9 L8.5 8.3 L10.8 6.3 C9 4 5 4.5 4.8 8 Z" fill="#3cb52a" stroke="#1c7a16" stroke-width="0.5"/><path d="M14.5 8.5 C14.5 14.5 6.5 15.5 4 12 L2 14 L1.5 7.5 L8 8.2 L5.7 10.2 C7.5 12.5 11.5 12 11.7 8.5 Z" fill="#e2d800" stroke="#8c8600" stroke-width="0.5"/></g></svg>
<svg class="ico" style="left:678px;top:67px" viewBox="0 0 24 24"><g transform="translate(2,2) scale(0.85)"><path d="M0 3 L6 0 L12 3 L6 6 Z" fill="#bdbdbd" stroke="#333" stroke-width="0.5"/><path d="M0 3 L6 6 V13 L0 10 Z" fill="#8a8a8a" stroke="#333" stroke-width="0.5"/><path d="M12 3 L6 6 V13 L12 10 Z" fill="#6a6a6a" stroke="#333" stroke-width="0.5"/></g><g transform="translate(11,2) scale(0.85)"><path d="M0 3 L6 0 L12 3 L6 6 Z" fill="#f2f2f2" stroke="#555" stroke-width="0.5"/><path d="M0 3 L6 6 V13 L0 10 Z" fill="#e2e2e2" stroke="#555" stroke-width="0.5"/><path d="M12 3 L6 6 V13 L12 10 Z" fill="#cfcfcf" stroke="#555" stroke-width="0.5"/></g><path d="M3 14.0 H9 M6.0 11 V17" stroke="#3fd21f" stroke-width="2.2"/><path d="M8 21 L14 12" stroke="#222" stroke-width="1"/><path d="M13 20 H20" stroke="#8f8a00" stroke-width="3.0"/><path d="M13 19.7 H20" stroke="#e8e000" stroke-width="2.2"/></svg>
<svg class="ico" style="left:705px;top:67px" viewBox="0 0 24 24"><path d="M11 21 L22 21.6 L17 18 Z" fill="#000" opacity="0.28"/><path d="M7 5.5 V18.5 A5 2.3 0 0 0 17 18.5 V5.5 Z" fill="url(#gCyl)" stroke="#1b2c5c" stroke-width="0.8"/><ellipse cx="12" cy="5.5" rx="5" ry="2.3" fill="#5f86d2" stroke="#1b2c5c" stroke-width="0.8"/><path d="M12 9 V20" stroke="#0e1d4a" stroke-width="1" stroke-dasharray="2.5 1.5"/></svg>
<svg class="ico" style="left:731px;top:67px" viewBox="0 0 24 24"><path d="M11 21 L22 21.6 L17 18 Z" fill="#000" opacity="0.28"/><path d="M7 5.5 V18.5 A5 2.3 0 0 0 17 18.5 V5.5 Z" fill="#b9c4e6" stroke="#1b2c5c" stroke-width="0.8"/><ellipse cx="12" cy="5.5" rx="5" ry="2.3" fill="#6f8fd2" stroke="#1b2c5c" stroke-width="0.8"/><path d="M10.5 8.5 V20.5 M13 8.5 V20.8" stroke="#e4df55" stroke-width="1"/><path d="M8.5 8 V20 M15.2 8 V20.3" stroke="#2a3a72" stroke-width="0.9"/></svg>
<svg class="ico" style="left:757px;top:67px" viewBox="0 0 24 24"><path d="M11 21 L22 21.6 L17 18 Z" fill="#000" opacity="0.28"/><path d="M7 5.5 V18.5 A5 2.3 0 0 0 17 18.5 V5.5 Z" fill="url(#gCylL)" stroke="#35dfee" stroke-width="1"/><ellipse cx="12" cy="5.5" rx="5" ry="2.3" fill="#eef3fd" stroke="#35dfee" stroke-width="1"/><path d="M8 13 L11.5 18 L17.5 8.5" fill="none" stroke="#1a8a12" stroke-width="3.4"/><path d="M8 13 L11.5 18 L17.5 8.5" fill="none" stroke="#4ad23a" stroke-width="2.2"/></svg>
<svg class="ico" style="left:783px;top:67px" viewBox="0 0 24 24"><path d="M11 21 L22 21.6 L17 18 Z" fill="#000" opacity="0.28"/><path d="M7 5.5 V18.5 A5 2.3 0 0 0 17 18.5 V5.5 Z" fill="url(#gCylL)" stroke="#35dfee" stroke-width="1"/><ellipse cx="12" cy="5.5" rx="5" ry="2.3" fill="#eef3fd" stroke="#35dfee" stroke-width="1"/><rect x="15" y="1.5" width="5" height="5" fill="none" stroke="#e59a1c" stroke-width="1.4"/><circle cx="17" cy="4.5" r="1.2" fill="#e0402a"/></svg>
<svg class="ico" style="left:809px;top:67px" viewBox="0 0 24 24"><path d="M7 5.5 V18.5 A5 2.3 0 0 0 17 18.5 V5.5" fill="none" stroke="#5aa6e6" stroke-width="0.8"/><ellipse cx="12" cy="5.5" rx="5" ry="2.3" fill="none" stroke="#5aa6e6" stroke-width="0.8"/><path d="M9 7.5 L11 20.5 L12.5 7.8 L15 20.3 L16 7 M8 19 L10 7.6 M13.5 20.6 L14.5 7.6 M7 12 L12 13.5 L17 11" fill="none" stroke="#5aa6e6" stroke-width="0.6"/></svg>
<svg class="ico" style="left:835px;top:67px" viewBox="0 0 24 24"><path d="M3.5 7 L12 3.5 L20.5 7 L12 11 Z" fill="#4b7fd8" stroke="#0b1636" stroke-width="0.8"/><path d="M3.5 7 L12 11 V21.5 C7 19 4 14 3.5 7 Z" fill="#1f3f94" stroke="#0b1636" stroke-width="0.8"/><path d="M20.5 7 L12 11 V21.5 C17 19 20 14 20.5 7 Z" fill="#0f2158" stroke="#0b1636" stroke-width="0.8"/></svg>
<svg class="ico" style="left:876px;top:67px" viewBox="0 0 24 24"><g transform="translate(3,1) scale(0.95)"><path d="M6.5 13.5 L1.5 19" stroke="#9b9b9b" stroke-width="3.4" stroke-linecap="round"/><path d="M6.5 13.5 L1.5 19" stroke="#e4e4e4" stroke-width="1.6" stroke-linecap="round"/><circle cx="10.5" cy="9" r="6.3" fill="url(#gLens)" stroke="#7d9cc4" stroke-width="1.5"/><path d="M8.5 5.5 L13 9 L8.5 12.5 Z" fill="#b8c9dc" stroke="#7d93ad" stroke-width="0.5"/></g><g transform="translate(13,11) scale(0.75)"><path d="M0 3 L6 0 L12 3 L6 6 Z" fill="#8c8c8c" stroke="#222" stroke-width="0.5"/><path d="M0 3 L6 6 V13 L0 10 Z" fill="#6f6f6f" stroke="#222" stroke-width="0.5"/><path d="M12 3 L6 6 V13 L12 10 Z" fill="#3c3c3c" stroke="#222" stroke-width="0.5"/></g><path d="M2 4.5 H7 M4.5 2 V7 M2 9.5 H7" stroke="#000" stroke-width="1"/></svg>
<svg class="ico" style="left:902px;top:67px" viewBox="0 0 24 24"><g transform="translate(3,1) scale(0.95)"><path d="M6.5 13.5 L1.5 19" stroke="#9b9b9b" stroke-width="3.4" stroke-linecap="round"/><path d="M6.5 13.5 L1.5 19" stroke="#e4e4e4" stroke-width="1.6" stroke-linecap="round"/><circle cx="10.5" cy="9" r="6.3" fill="url(#gLens)" stroke="#7d9cc4" stroke-width="1.5"/><path d="M8.5 5.5 L13 9 L8.5 12.5 Z" fill="#b8c9dc" stroke="#7d93ad" stroke-width="0.5"/></g><g transform="translate(12,11) scale(0.75)"><path d="M0 3 L6 0 L12 3 L6 6 Z" fill="#8c8c8c" stroke="#222" stroke-width="0.5"/><path d="M0 3 L6 6 V13 L0 10 Z" fill="#6f6f6f" stroke="#222" stroke-width="0.5"/><path d="M12 3 L6 6 V13 L12 10 Z" fill="#3c3c3c" stroke="#222" stroke-width="0.5"/></g><rect x="1" y="1" width="4" height="4" fill="#2fae22" stroke="#1b7a14" stroke-width="0.4"/><path d="M1.8 1.8 L4.2 4.2 M4.2 1.8 L1.8 4.2" stroke="#b6f0a8" stroke-width="0.6"/><rect x="19" y="1" width="4" height="4" fill="#2fae22" stroke="#1b7a14" stroke-width="0.4"/><path d="M19.8 1.8 L22.2 4.2 M22.2 1.8 L19.8 4.2" stroke="#b6f0a8" stroke-width="0.6"/><rect x="1" y="19" width="4" height="4" fill="#2fae22" stroke="#1b7a14" stroke-width="0.4"/><path d="M1.8 19.8 L4.2 22.2 M4.2 19.8 L1.8 22.2" stroke="#b6f0a8" stroke-width="0.6"/><rect x="19" y="19" width="4" height="4" fill="#2fae22" stroke="#1b7a14" stroke-width="0.4"/><path d="M19.8 19.8 L22.2 22.2 M22.2 19.8 L19.8 22.2" stroke="#b6f0a8" stroke-width="0.6"/></svg>
<svg class="ico" style="left:928px;top:67px" viewBox="0 0 24 24"><rect x="4" y="5.5" width="16" height="13" fill="#e9eefc" stroke="#333" stroke-width="1.2"/><text x="12" y="16" font-size="9.5" font-weight="bold" font-family="Liberation Sans, sans-serif" text-anchor="middle" fill="#1d1d8f">1:1</text><rect x="1" y="2" width="4" height="4" fill="#2fae22" stroke="#1b7a14" stroke-width="0.4"/><path d="M1.8 2.8 L4.2 5.2 M4.2 2.8 L1.8 5.2" stroke="#b6f0a8" stroke-width="0.6"/><rect x="19" y="2" width="4" height="4" fill="#2fae22" stroke="#1b7a14" stroke-width="0.4"/><path d="M19.8 2.8 L22.2 5.2 M22.2 2.8 L19.8 5.2" stroke="#b6f0a8" stroke-width="0.6"/><rect x="1" y="18" width="4" height="4" fill="#2fae22" stroke="#1b7a14" stroke-width="0.4"/><path d="M1.8 18.8 L4.2 21.2 M4.2 18.8 L1.8 21.2" stroke="#b6f0a8" stroke-width="0.6"/><rect x="19" y="18" width="4" height="4" fill="#2fae22" stroke="#1b7a14" stroke-width="0.4"/><path d="M19.8 18.8 L22.2 21.2 M22.2 18.8 L19.8 21.2" stroke="#b6f0a8" stroke-width="0.6"/></svg>
<svg class="ico" style="left:954px;top:67px" viewBox="0 0 24 24"><path d="M6 18 L18 6" stroke="#1b7a14" stroke-width="3"/><path d="M6 18 L18 6" stroke="#3ec22e" stroke-width="1.8"/><path d="M21 3 L12.5 5.5 L18.5 11.5 Z" fill="#3ec22e" stroke="#1b7a14" stroke-width="0.7"/><circle cx="5.5" cy="18.5" r="3" fill="#bbb" stroke="#555" stroke-width="0.6"/><circle cx="4.6" cy="17.6" r="1" fill="#fff"/></svg>
<svg class="ico" style="left:980px;top:67px" viewBox="0 0 24 24"><path d="M4 12 C4 4 13 2 16 7 L19 5 L18.5 13 L11 11 L14 9 C12 6 7 7.5 7.5 12 Z" fill="#3ab52a" stroke="#1b7a14" stroke-width="0.7"/><path d="M20 12 C20 20 11 22 8 17 L5 19 L5.5 11 L13 13 L10 15 C12 18 17 16.5 16.5 12 Z" fill="#3ab52a" stroke="#1b7a14" stroke-width="0.7"/></svg>
<svg class="ico" style="left:1006px;top:67px" viewBox="0 0 24 24"><g transform="translate(2,1) scale(1.0)"><path d="M1 8 C5 1.5 15 1.5 19 7 C15 10.5 6 11 1 8 Z" fill="#b4bedc"/><path d="M1 8 C5 1.5 15 1.5 19 7" fill="none" stroke="#2d3550" stroke-width="1.3"/><path d="M3 4.5 L2 3 M6 2.8 L5.4 1.2 M9.5 2 L9.3 0.4 M13 2.2 L13.6 0.7 M16.2 3.6 L17.4 2.3" stroke="#3a4263" stroke-width="0.6"/><circle cx="10" cy="6.5" r="3.6" fill="#3c4f86"/><circle cx="10" cy="6.5" r="1.6" fill="#1a2240"/><circle cx="9" cy="5.5" r="0.8" fill="#dfe8ff"/><path d="M1 8 C6 11 15 10.5 19 7" fill="none" stroke="#b08f98" stroke-width="0.7"/></g><circle cx="12" cy="16" r="6" fill="#ffd52e" stroke="#d69a12" stroke-width="0.6"/><circle cx="10" cy="14.5" r="0.9" fill="#222"/><circle cx="14" cy="14.5" r="0.9" fill="#222"/><path d="M8.5 17.5 C10.5 20 13.5 20 15.5 17.5" fill="none" stroke="#8a5a10" stroke-width="0.8"/></svg>
<svg class="ico" style="left:1050px;top:67px" viewBox="0 0 24 24"><g transform="translate(0,0) scale(1)"><path d="M2 12 L12 6 L22 11 L12 19 Z" fill="#dfe7f7" stroke="#a9b6d3" stroke-width="0.5"/><path d="M7 14 V4" stroke="#1e5df0" stroke-width="1.8"/><path d="M7 1 L4.3 6 H9.7 Z" fill="#1e5df0"/><path d="M7 14 L16 8.5" stroke="#2bb32a" stroke-width="1.8"/><path d="M18.5 7 L13.2 7.6 L15.6 11 Z" fill="#2bb32a"/><path d="M7 14 L15 19" stroke="#e0262d" stroke-width="1.8"/><path d="M17.5 20.8 L15 15.8 L12.6 19.6 Z" fill="#e0262d"/><circle cx="7" cy="14" r="2" fill="#e8e8e8" stroke="#777" stroke-width="0.6"/></g></svg>
<svg class="ico" style="left:1076px;top:67px" viewBox="0 0 24 24"><g transform="translate(8,0) scale(0.6)"><path d="M2 12 L12 6 L22 11 L12 19 Z" fill="#dfe7f7" stroke="#a9b6d3" stroke-width="0.5"/><path d="M7 14 V4" stroke="#1e5df0" stroke-width="1.8"/><path d="M7 1 L4.3 6 H9.7 Z" fill="#1e5df0"/><path d="M7 14 L16 8.5" stroke="#2bb32a" stroke-width="1.8"/><path d="M18.5 7 L13.2 7.6 L15.6 11 Z" fill="#2bb32a"/><path d="M7 14 L15 19" stroke="#e0262d" stroke-width="1.8"/><path d="M17.5 20.8 L15 15.8 L12.6 19.6 Z" fill="#e0262d"/><circle cx="7" cy="14" r="2" fill="#e8e8e8" stroke="#777" stroke-width="0.6"/></g><path d="M4 19 L13 10" stroke="#1b7a14" stroke-width="4"/><path d="M4 19 L13 10" stroke="#3ec22e" stroke-width="2.6"/><path d="M15.5 7.5 L7.5 9.5 L13.5 15.5 Z" fill="#3ec22e" stroke="#1b7a14" stroke-width="0.6"/><rect x="10" y="17" width="10" height="4.5" fill="#e8e8e8" stroke="#777" stroke-width="1.2"/><circle cx="4" cy="20" r="2" fill="none" stroke="#777" stroke-width="1"/></svg>
<svg class="ico" style="left:1102px;top:67px" viewBox="0 0 24 24"><g transform="translate(9,0) scale(0.6)"><path d="M2 12 L12 6 L22 11 L12 19 Z" fill="#dfe7f7" stroke="#a9b6d3" stroke-width="0.5"/><path d="M7 14 V4" stroke="#1e5df0" stroke-width="1.8"/><path d="M7 1 L4.3 6 H9.7 Z" fill="#1e5df0"/><path d="M7 14 L16 8.5" stroke="#2bb32a" stroke-width="1.8"/><path d="M18.5 7 L13.2 7.6 L15.6 11 Z" fill="#2bb32a"/><path d="M7 14 L15 19" stroke="#e0262d" stroke-width="1.8"/><path d="M17.5 20.8 L15 15.8 L12.6 19.6 Z" fill="#e0262d"/><circle cx="7" cy="14" r="2" fill="#e8e8e8" stroke="#777" stroke-width="0.6"/></g><path d="M4 10 L12 18" stroke="#1b7a14" stroke-width="4.5"/><path d="M4 10 L12 18" stroke="#3ec22e" stroke-width="3"/><path d="M1.5 7 L9 8.5 L3.5 14.5 Z" fill="#3ec22e" stroke="#1b7a14" stroke-width="0.6"/><path d="M14.5 21 L7 19.5 L12.5 13.5 Z" fill="#3ec22e" stroke="#1b7a14" stroke-width="0.6"/></svg>
<svg class="ico" style="left:1144px;top:67px" viewBox="0 0 24 24"><rect x="2.5" y="2.5" width="6" height="6" fill="#12d6f2"/><rect x="9.0" y="2.5" width="6" height="6" fill="#f2e600"/><rect x="15.5" y="2.5" width="6" height="6" fill="#1be21b"/><rect x="2.5" y="9.0" width="6" height="6" fill="#f28a00"/><rect x="9.0" y="9.0" width="6" height="6" fill="#b06a12"/><rect x="15.5" y="9.0" width="6" height="6" fill="#f216e0"/><rect x="2.5" y="15.5" width="6" height="6" fill="#1414f2"/><rect x="9.0" y="15.5" width="6" height="6" fill="#12b032"/><rect x="15.5" y="15.5" width="6" height="6" fill="#8a8a8a"/></svg>
<svg class="ico" style="left:1170px;top:67px" viewBox="0 0 24 24"><rect x="4.5" y="2.5" width="15" height="19" fill="#e6edf9" stroke="#7d8aa8" stroke-width="0.9"/><rect x="6" y="4.5" width="12" height="1.6" fill="#6f9be8"/><rect x="6" y="7" width="5" height="1.3" fill="#f2b21a"/><rect x="12.5" y="7" width="5" height="1.3" fill="#f2b21a"/><rect x="6" y="9.3" width="12" height="1.3" fill="#8fe07a"/><rect x="7.5" y="11.5" width="2.8" height="2.8" fill="#12d6f2"/><rect x="10.7" y="11.5" width="2.8" height="2.8" fill="#f2e600"/><rect x="13.9" y="11.5" width="2.8" height="2.8" fill="#1be21b"/><rect x="7.5" y="14.7" width="2.8" height="2.8" fill="#f28a00"/><rect x="10.7" y="14.7" width="2.8" height="2.8" fill="#b06a12"/><rect x="13.9" y="14.7" width="2.8" height="2.8" fill="#f216e0"/><rect x="7.5" y="17.9" width="2.8" height="2.8" fill="#1414f2"/><rect x="10.7" y="17.9" width="2.8" height="2.8" fill="#12b032"/><rect x="13.9" y="17.9" width="2.8" height="2.8" fill="#8a8a8a"/></svg>
<svg class="ico" style="left:1197px;top:67px" viewBox="0 0 24 24"><circle cx="12" cy="12" r="9.5" fill="#6c9a4a" stroke="#4c7a32" stroke-width="0.8"/><path d="M7 7 L17 18" stroke="#ececec" stroke-width="3" stroke-linecap="round"/><circle cx="7" cy="7" r="2.6" fill="none" stroke="#ececec" stroke-width="1.8"/><path d="M17 6 L8 17" stroke="#4f86d8" stroke-width="2.6" stroke-linecap="round"/><path d="M12 13 L9.5 19 H14.5 Z" fill="#bdbdbd"/></svg>
<svg class="ico" style="left:1223px;top:67px" viewBox="0 0 24 24"><rect x="2.5" y="2.5" width="19" height="19" fill="#dfe8f7" stroke="#4b5f88" stroke-width="0.9"/><rect x="2.5" y="2.5" width="19" height="3.5" fill="#3d68b8"/><path d="M5 8 H20" stroke="#8a9a1a" stroke-width="1.6" stroke-dasharray="1.6 1.4"/><path d="M5 10 V20" stroke="#b0641a" stroke-width="1.8" stroke-dasharray="1.6 1.4"/><path d="M9 11 L18 20" stroke="#9fb6d8" stroke-width="2.2" stroke-linecap="round"/><path d="M18 11 L9 20" stroke="#5f8fd8" stroke-width="2.2" stroke-linecap="round"/></svg>
<svg class="ico" style="left:1249px;top:67px" viewBox="0 0 24 24"><rect x="3.5" y="4" width="17" height="17" fill="none" stroke="#1d3f7a" stroke-width="1.6" stroke-dasharray="1.6 2.3"/><path d="M7 13 L13 6 L21 5 L21.5 10 L15 11.5 L12 15 Z" fill="#e0a85a" stroke="#8a5a1c" stroke-width="0.7"/><circle cx="7.5" cy="17" r="3.2" fill="#f2e02a"/><path d="M5.2 17 H9.8 M7.5 14.7 V19.3" stroke="#1d56e0" stroke-width="1.3"/></svg>
<svg class="ico" style="left:1275px;top:67px" viewBox="0 0 24 24"><path d="M7 5 L21.5 3.5 L17.5 19 L3 20.5 Z" fill="#f0a6a6" stroke="#2f64d8" stroke-width="1.6"/><path d="M8.5 9 L20 7.5 M7.5 13 L19 11.5 M6 17 L18 15.5 M11 4.8 L7 20 M15 4.4 L11 19.6 M18.5 4 L14.5 19.3" stroke="#d83030" stroke-width="0.9"/></svg>
<div id="sidebar"></div>
<div class="grip-h" style="left:1px;top:122px;width:58px"></div>
<div class="grip-h" style="left:1px;top:374px;width:58px"></div>
<div class="hl" style="left:5px;top:184px;width:24px;height:24px"></div>
<svg class="ico" style="left:5px;top:132px" viewBox="0 0 24 24"><path d="M3 5 H8 M2 8 H7 M3 11 H8" stroke="#b9c2d6" stroke-width="1.4"/><g transform="translate(3,1) scale(0.95)"><path d="M6.5 13.5 L1.5 19" stroke="#9b9b9b" stroke-width="3.4" stroke-linecap="round"/><path d="M6.5 13.5 L1.5 19" stroke="#e4e4e4" stroke-width="1.6" stroke-linecap="round"/><circle cx="10.5" cy="9" r="6.3" fill="url(#gLens)" stroke="#7d9cc4" stroke-width="1.5"/></g></svg>
<svg class="ico" style="left:31px;top:132px" viewBox="0 0 24 24"><path d="M3 4 L8 9 M9 2 L20 16 M14 18 L19 22" stroke="#3d7ae0" stroke-width="1.7"/><g transform="translate(2,1)"><ellipse cx="9" cy="19.5" rx="6" ry="1.3" fill="#000" opacity="0.25"/><path d="M5 17 L6.5 13 L17 2.5 L19.5 5 L9 15.5 Z" fill="#d9a441" stroke="#7a5418" stroke-width="0.6"/><path d="M5 17 L6.5 13 L9 15.5 Z" fill="#f1d7a8"/><path d="M5 17 L5.8 15 L7 16.2 Z" fill="#333"/><path d="M16 3.5 L17 2.5 L19.5 5 L18.5 6 Z" fill="#e03030"/></g><path d="M16 1 H22 L19 4.2 Z" fill="#000"/></svg>
<svg class="ico" style="left:5px;top:158px" viewBox="0 0 24 24"><rect x="5" y="6" width="14" height="12" fill="url(#gDoc)" stroke="#444" stroke-width="1.2"/><rect x="1.5" y="2.5" width="4" height="4" fill="#2fae22" stroke="#1b7a14" stroke-width="0.4"/><path d="M2.3 3.3 L4.7 5.7 M4.7 3.3 L2.3 5.7" stroke="#b6f0a8" stroke-width="0.6"/><rect x="18.5" y="2.5" width="4" height="4" fill="#2fae22" stroke="#1b7a14" stroke-width="0.4"/><path d="M19.3 3.3 L21.7 5.7 M21.7 3.3 L19.3 5.7" stroke="#b6f0a8" stroke-width="0.6"/><rect x="1.5" y="17.5" width="4" height="4" fill="#2fae22" stroke="#1b7a14" stroke-width="0.4"/><path d="M2.3 18.3 L4.7 20.7 M4.7 18.3 L2.3 20.7" stroke="#b6f0a8" stroke-width="0.6"/><rect x="18.5" y="17.5" width="4" height="4" fill="#2fae22" stroke="#1b7a14" stroke-width="0.4"/><path d="M19.3 18.3 L21.7 20.7 M21.7 18.3 L19.3 20.7" stroke="#b6f0a8" stroke-width="0.6"/></svg>
<svg class="ico" style="left:31px;top:158px" viewBox="0 0 24 24"><path d="M9 4 C3 3 2 9 7 11 C13 13 19 12 19 17 C19 21 12 21 9 18" fill="none" stroke="#3d7ae0" stroke-width="1.7"/><g transform="translate(2,1)"><ellipse cx="9" cy="19.5" rx="6" ry="1.3" fill="#000" opacity="0.25"/><path d="M5 17 L6.5 13 L17 2.5 L19.5 5 L9 15.5 Z" fill="#d9a441" stroke="#7a5418" stroke-width="0.6"/><path d="M5 17 L6.5 13 L9 15.5 Z" fill="#f1d7a8"/><path d="M5 17 L5.8 15 L7 16.2 Z" fill="#333"/><path d="M16 3.5 L17 2.5 L19.5 5 L18.5 6 Z" fill="#e03030"/></g><path d="M16 1 H22 L19 4.2 Z" fill="#000"/></svg>
<svg class="ico" style="left:5px;top:184px" viewBox="0 0 24 24"><g transform="translate(3,2) scale(0.95)"><path d="M6.5 13.5 L1.5 19" stroke="#9b9b9b" stroke-width="3.4" stroke-linecap="round"/><path d="M6.5 13.5 L1.5 19" stroke="#e4e4e4" stroke-width="1.6" stroke-linecap="round"/><circle cx="10.5" cy="9" r="6.3" fill="url(#gLens)" stroke="#7d9cc4" stroke-width="1.5"/><path d="M8.5 5.5 L13 9 L8.5 12.5 Z" fill="#b8c9dc" stroke="#7d93ad" stroke-width="0.5"/></g><g transform="translate(13,12) scale(0.75)"><path d="M0 3 L6 0 L12 3 L6 6 Z" fill="#8c8c8c" stroke="#222" stroke-width="0.5"/><path d="M0 3 L6 6 V13 L0 10 Z" fill="#6f6f6f" stroke="#222" stroke-width="0.5"/><path d="M12 3 L6 6 V13 L12 10 Z" fill="#3c3c3c" stroke="#222" stroke-width="0.5"/></g><path d="M2 5 H7 M4.5 2.5 V7.5 M2 9.5 H7" stroke="#000" stroke-width="1"/><path d="M16 1 H22 L19 4.2 Z" fill="#000"/></svg>
<svg class="ico" style="left:31px;top:184px" viewBox="0 0 24 24"><path d="M3.5 5.5 H17.5 V12 H14.5 V16 H17.5 V21 H3.5 Z" fill="#fff7a0" stroke="#f2ee00" stroke-width="1.8"/><path d="M6.5 12 L10.5 17.5 L16 6.5" fill="none" stroke="#2a8a1c" stroke-width="3.4"/><path d="M6.5 12 L10.5 17.5 L16 6.5" fill="none" stroke="#57d23f" stroke-width="2.2"/><path d="M16 1 H22 L19 4.2 Z" fill="#000"/></svg>
<svg class="ico" style="left:5px;top:210px" viewBox="0 0 24 24"><g transform="translate(0,0) scale(1)"><path d="M2 12 L12 6 L22 11 L12 19 Z" fill="#dfe7f7" stroke="#a9b6d3" stroke-width="0.5"/><path d="M7 14 V4" stroke="#1e5df0" stroke-width="1.8"/><path d="M7 1 L4.3 6 H9.7 Z" fill="#1e5df0"/><path d="M7 14 L16 8.5" stroke="#2bb32a" stroke-width="1.8"/><path d="M18.5 7 L13.2 7.6 L15.6 11 Z" fill="#2bb32a"/><path d="M7 14 L15 19" stroke="#e0262d" stroke-width="1.8"/><path d="M17.5 20.8 L15 15.8 L12.6 19.6 Z" fill="#e0262d"/><circle cx="7" cy="14" r="2" fill="#e8e8e8" stroke="#777" stroke-width="0.6"/></g><path d="M16 1 H22 L19 4.2 Z" fill="#000"/></svg>
<svg class="ico" style="left:31px;top:210px" viewBox="0 0 24 24"><path d="M3 17 C3 5 8 2 10 8 C12 15 14 22 17 20 C19 18 19 14 19 12" fill="none" stroke="#3d7ae0" stroke-width="1.7"/><g transform="translate(2,1)"><ellipse cx="9" cy="19.5" rx="6" ry="1.3" fill="#000" opacity="0.25"/><path d="M5 17 L6.5 13 L17 2.5 L19.5 5 L9 15.5 Z" fill="#d9a441" stroke="#7a5418" stroke-width="0.6"/><path d="M5 17 L6.5 13 L9 15.5 Z" fill="#f1d7a8"/><path d="M5 17 L5.8 15 L7 16.2 Z" fill="#333"/><path d="M16 3.5 L17 2.5 L19.5 5 L18.5 6 Z" fill="#e03030"/></g><path d="M16 1 H22 L19 4.2 Z" fill="#000"/></svg>
<svg class="ico" style="left:5px;top:235.5px" viewBox="0 0 24 24"><g transform="translate(0,1) scale(0.95)"><path d="M3 3 L13 2 L17 4 L7 5.5 Z" fill="#6f7ff0"/><path d="M3 6 L13 5 L17 7 L7 8.5 Z" fill="#b9c3f5"/><path d="M3 9 L13 8 L17 10 L7 11.5 Z" fill="#e4e4e4" stroke="#999" stroke-width="0.4"/><ellipse cx="12" cy="16.5" rx="8" ry="5" fill="#d09a72" stroke="#8a5a3c" stroke-width="0.7"/><circle cx="8.5" cy="17.5" r="1.9" fill="#1b53e6"/><circle cx="13" cy="18.6" r="1.9" fill="#16b61c"/><circle cx="15.5" cy="14.8" r="1.8" fill="#e02a1e"/><path d="M12 13 L21 2.5" stroke="#b5742b" stroke-width="1.6"/><path d="M11 14.5 L13 12" stroke="#444" stroke-width="2"/></g><path d="M16 1 H22 L19 4.2 Z" fill="#000"/></svg>
<svg class="ico" style="left:31px;top:235.5px" viewBox="0 0 24 24"><path d="M8 5 L21 2.5 L17 18 L3 21 Z" fill="#9cc4f6" stroke="#2f64d8" stroke-width="1.5"/><path d="M14.5 3.8 L10 19.5 M5.8 12.5 L19 10" stroke="#e9f2ff" stroke-width="1.3"/><path d="M16 1 H22 L19 4.2 Z" fill="#000"/></svg>
<svg class="ico" style="left:5px;top:261.5px" viewBox="0 0 24 24"><g transform="translate(0,2) scale(1.0)"><path d="M3 10 C3 3.5 12 2.5 15 6 L17.5 3.5 L18 11 L10.5 10.2 L13 8 C11 5.8 6.5 6.3 6.2 10 Z" fill="#6f9fe0" stroke="#3c6db8" stroke-width="0.6"/><path d="M18 11.5 C18 18 9 19 6 15.5 L3.5 18 L3 10.5 L10.5 11.3 L8 13.5 C10 15.7 14.5 15.2 14.8 11.5 Z" fill="#8db5ea" stroke="#3c6db8" stroke-width="0.6"/></g><path d="M16 1 H22 L19 4.2 Z" fill="#000"/></svg>
<svg class="ico" style="left:31px;top:261.5px" viewBox="0 0 24 24"><ellipse cx="13" cy="21" rx="8" ry="1.5" fill="#000" opacity="0.25"/><g transform="translate(3,4) scale(1.4)"><path d="M0 3 L6 0 L12 3 L6 6 Z" fill="#c9c9c9" stroke="#333" stroke-width="0.5"/><path d="M0 3 L6 6 V13 L0 10 Z" fill="#9a9a9a" stroke="#333" stroke-width="0.5"/><path d="M12 3 L6 6 V13 L12 10 Z" fill="#5a5a5a" stroke="#333" stroke-width="0.5"/></g><path d="M16 1 H22 L19 4.2 Z" fill="#000"/></svg>
<svg class="ico" style="left:5px;top:287.5px" viewBox="0 0 24 24"><ellipse cx="12" cy="21" rx="6" ry="1.4" fill="#000" opacity="0.25"/><text x="11.5" y="18" font-size="20" font-weight="bold" font-family="Liberation Sans, sans-serif" text-anchor="middle" fill="#5f8fd8" stroke="#2f5fae" stroke-width="0.5">?</text><path d="M16 1 H22 L19 4.2 Z" fill="#000"/></svg>
<svg class="ico" style="left:31px;top:287.5px" viewBox="0 0 24 24"><path d="M4.5 5 V20 M21 5 V20" stroke="#444" stroke-width="1.3"/><path d="M5.5 8.5 H20" stroke="#f2e600" stroke-width="1.8"/><path d="M5 8.5 L8.5 6 V11 Z M20.5 8.5 L17 6 V11 Z" fill="#f2e600"/><path d="M16 1 H22 L19 4.2 Z" fill="#000"/></svg>
<svg class="ico" style="left:5px;top:313.5px" viewBox="0 0 24 24"><ellipse cx="13" cy="21.3" rx="7" ry="1.3" fill="#000" opacity="0.25"/><path d="M4.5 7 H19 L17 20.5 H6.5 Z" fill="#b8d8f2" stroke="#5a86b8" stroke-width="0.9"/><ellipse cx="11.8" cy="7" rx="7.3" ry="2" fill="#7fa6d0" stroke="#4a6f9a" stroke-width="0.8"/><path d="M10 3 H14 L15 7 H9 Z" fill="#f2e21a"/><path d="M9 11 L14 18 M14 11 L9 18" stroke="#e6f27a" stroke-width="1.6"/><path d="M16 1 H22 L19 4.2 Z" fill="#000"/></svg>
<svg class="ico" style="left:31px;top:313.5px" viewBox="0 0 24 24"><g transform="translate(3,3)"><ellipse cx="10" cy="17.5" rx="7" ry="1.6" fill="#000" opacity="0.18"/><path d="M1 6.5 L8 1 V4.5 C14 4.5 16 9 14.5 12.5 C13.5 15 11 16 9 16 C11.5 14 11.5 9.5 8 9.5 V12.5 Z" fill="url(#gGrey)" stroke="#8f8f8f" stroke-width="0.6"/></g><path d="M16 1 H22 L19 4.2 Z" fill="#000"/></svg>
<svg class="ico" style="left:5px;top:340px" viewBox="0 0 24 24"><rect x="3" y="2" width="3" height="14" fill="#6b7a8a"/><path d="M4.5 12 L6 16 L3 16 Z" fill="#f2b21a"/><circle cx="14" cy="11" r="6.5" fill="none" stroke="#8a4a1c" stroke-width="1.2"/><path d="M14 2.5 V19.5 M5.5 11 H22.5 M8 5 L20 17 M20 5 L8 17" stroke="#8a4a1c" stroke-width="1"/><circle cx="14" cy="11" r="2" fill="#f2c21a"/><path d="M3 18 L12 15 L21 17 L11 22 Z" fill="#f28a1a"/><path d="M5 19.5 L14 16.5 M8 21 L17 17.5" stroke="#fff" stroke-width="0.8"/><path d="M16 1 H22 L19 4.2 Z" fill="#000"/></svg>
<svg class="ico" style="left:31px;top:340px" viewBox="0 0 24 24"><path d="M6 10 H17 L21 13.5 V22 H6 Z" fill="url(#gDoc)" stroke="#111" stroke-width="1.2"/><path d="M2 5 L8 3.5 L9.5 5.5 L17 4.5 L16 15 L3 17 Z" fill="#e9b84a"/><path d="M3 17 L5.5 8.5 L19 7 L16 15 Z" fill="url(#gFold)" stroke="#d9a53a" stroke-width="0.5"/><path d="M9 8 C9 4 14 3 16 5.5 L17.5 4 L18 9.5 L13 9 L14.6 7.3 C13.5 6 11 6.4 11.2 8 Z" fill="#2cae2a"/></svg>
<div id="viewport">
<svg id="model" class="abs" style="left:0;top:0" width="1860" height="892" viewBox="60 109 1860 892" shape-rendering="geometricPrecision">
<defs>
<linearGradient id="mGroove" x1="0" y1="0" x2="1" y2="0"><stop offset="0" stop-color="#464646"/><stop offset="0.5" stop-color="#7c7c7c"/><stop offset="1" stop-color="#9a9a9a"/></linearGradient>
<linearGradient id="mFillet" x1="0" y1="0" x2="1" y2="0"><stop offset="0" stop-color="#9a9a9a"/><stop offset="0.5" stop-color="#8a8a8a"/><stop offset="1" stop-color="#5a5a5a"/></linearGradient>
<linearGradient id="mHole" x1="0" y1="0" x2="1" y2="0"><stop offset="0" stop-color="#3e3e3e"/><stop offset="0.55" stop-color="#868686"/><stop offset="1" stop-color="#b4b4b4"/></linearGradient>
<linearGradient id="mCyl" x1="0" y1="0" x2="1" y2="0"><stop offset="0" stop-color="#a8a8a8"/><stop offset="0.45" stop-color="#8a8a8a"/><stop offset="1" stop-color="#404040"/></linearGradient>
<linearGradient id="mCorner" x1="0" y1="0" x2="1" y2="0"><stop offset="0" stop-color="#505050"/><stop offset="1" stop-color="#a6a6a6"/></linearGradient>
</defs>
<polygon points="900,440 900,476.25 908.75,480.6 908.75,543.75 933.75,557.5 933.75,811 1055.5,881.3 1055.5,628 1081.25,643.1 1081.25,580.6 1085,581.25 1085,550" fill="#989898" stroke="none" stroke-width="1.0" stroke-linejoin="round" />
<polyline points="900,454 900,476.25 908.75,480.6 908.75,543.75 933.75,557.5 933.75,811 1055.5,881.3" fill="none" stroke="#000" stroke-width="1.0" stroke-linejoin="round" stroke-linecap="round"/>
<polygon points="1094.6,566 1094.6,643.75 1119.4,629.4 1119.4,879.9 1242.3,811 1242.3,560 1170,600" fill="#434343" stroke="#000" stroke-width="1.0" stroke-linejoin="round" />
<polygon points="1055.4,628.1 1072.5,638.1 1073.2,868.1 1055.5,881.3" fill="#434343" stroke="#000" stroke-width="1.0" stroke-linejoin="round" />
<path d="M1072.5,638.1 L1081.25,643.1 Q1088,646.5 1094.6,643.75 L1103.1,638.75 L1103.9,868.1 Q1088,878 1073.2,868.1 Z" fill="url(#mGroove)" stroke="#000" stroke-width="1.0" stroke-linejoin="round"/>
<polygon points="1103.1,638.75 1119.4,629.4 1119.4,879.9 1103.9,868.1" fill="#989898" stroke="#000" stroke-width="1.0" stroke-linejoin="round" />
<polygon points="1081.25,580.6 1094.6,573 1094.6,643.75 1088,645.3 1081.25,643.1" fill="url(#mFillet)" stroke="#000" stroke-width="1.0" stroke-linejoin="round" />
<polygon points="1055.4,560 1081.25,575 1081.25,643.1 1055.4,628.1" fill="#989898" stroke="none" stroke-width="1.0" stroke-linejoin="round" />
<polyline points="1055.4,881.3 1055.4,628.1 1081.25,643.1" fill="none" stroke="#000" stroke-width="1.0" stroke-linejoin="round" stroke-linecap="round"/>
<polyline points="1081.25,580.6 1081.25,643.1" fill="none" stroke="#000" stroke-width="1.0" stroke-linejoin="round" stroke-linecap="round"/>
<polyline points="908.75,543.75 908.75,480.6 1081.25,580.6" fill="none" stroke="#000" stroke-width="1.0" stroke-linejoin="round" stroke-linecap="round"/>
<polyline points="900,476.25 908.75,480.6" fill="none" stroke="#000" stroke-width="1.0" stroke-linejoin="round" stroke-linecap="round"/>
<polygon points="1085,559 1106,571.5 1085,581.25" fill="#434343" stroke="#000" stroke-width="1.0" stroke-linejoin="round" />
<polyline points="1085,562.5 1085,581.25 1081.25,580.6" fill="none" stroke="#000" stroke-width="1.0" stroke-linejoin="round" stroke-linecap="round"/>
<polygon points="782.5,349.4 1170,573.75 1170,609.4 782.5,387.5" fill="#989898" stroke="none" stroke-width="1.0" stroke-linejoin="round" />
<polyline points="900,454.1 782.5,387.5 782.5,349.4 1170,573.75 1170,609.4 1085,562.5" fill="none" stroke="#000" stroke-width="1.0" stroke-linejoin="round" stroke-linecap="round"/>
<polygon points="905,478.4 908.75,480.6 908.75,543.75 905,541.6" fill="#989898" stroke="none" stroke-width="1.0" stroke-linejoin="round" />
<polygon points="1170,573.75 1356,466 1356,500.5 1170,609.4" fill="#434343" stroke="#000" stroke-width="1.0" stroke-linejoin="round" />
<polygon points="1168,572.8 1172.5,572.5 1172.5,608 1168,608.6" fill="#a8a8a8" stroke="#000" stroke-width="0.7" stroke-linejoin="round" />
<polygon points="782.5,349.4 1170,573.75 1356,466 1311.25,440 1305,441.9 1285.6,430 1284.4,425 1076.25,305 1071.25,306.25 1050,293.1 1050,288.75 968.75,243.1" fill="#b0b0b0" stroke="#000" stroke-width="1.0" stroke-linejoin="round" />
<polygon points="900.0,280.62 968.75,243.12 976.25,247.5 907.5,287.5" fill="#b0b0b0" stroke="none" stroke-width="1.0" stroke-linejoin="round" />
<polygon points="848.75,270.0 897.25,296.88 897.25,306.88 880.0,310.0 848.75,310.38" fill="#989898" stroke="#000" stroke-width="1.0" stroke-linejoin="round" />
<polygon points="897.25,296.88 910.62,290.0 910.62,294.0 900.0,299.75 900.0,306.88 897.25,306.88" fill="#434343" stroke="#000" stroke-width="1.0" stroke-linejoin="round" />
<polygon points="862.5,261.62 910.62,290.0 897.25,296.88 848.75,270.0" fill="#b0b0b0" stroke="#000" stroke-width="1.0" stroke-linejoin="round" />
<polygon points="877.5,296.25 881.25,298.12 877.5,300.62" fill="#434343" stroke="#000" stroke-width="1.0" stroke-linejoin="round" />
<polyline points="900.0,280.62 968.75,243.12" fill="none" stroke="#000" stroke-width="1.0" stroke-linejoin="round" stroke-linecap="round"/>
<path d="M908.75,286.88 Q914.38,283.12 920.0,287.25 L920.0,289.0 L910.62,294.0 Z" fill="url(#mHole)" stroke="#000" stroke-width="1.0" stroke-linejoin="round"/>
<polyline points="900.0,301.88 943.12,276.5 946.25,275.25 950.0,276.25 982.5,296.25 935.0,322.5" fill="none" stroke="#000" stroke-width="1.0" stroke-linejoin="round" stroke-linecap="round"/>
<polygon points="900.0,301.88 935.0,321.88 931.25,323.75 900.0,304.62" fill="#a4a4a4" stroke="#000" stroke-width="1.0" stroke-linejoin="round" />
<ellipse cx="937.5" cy="295.62" rx="10.2" ry="5.8" fill="url(#mHole)" stroke="#000" stroke-width="1.0"/>
<path d="M931.176,298.81 Q937.5,296.2 943.824,298.81 Q937.5,302.87 931.176,298.81 Z" fill="#b4b4b4" stroke="#000" stroke-width="1.0" stroke-linejoin="round"/>
<ellipse cx="906.88" cy="320.0" rx="8" ry="5" fill="url(#mHole)" stroke="#000" stroke-width="1.0"/>
<ellipse cx="905.62" cy="321.88" rx="4.5" ry="2.6" fill="#b0b0b0" stroke="#000" stroke-width="1.0"/>
<polygon points="834.38,313.12 846.25,320.0 846.25,324.38 834.38,318.12" fill="#989898" stroke="#000" stroke-width="1.0" stroke-linejoin="round" />
<polygon points="834.38,313.12 855.0,299.38 868.75,307.25 846.25,320.0" fill="#b0b0b0" stroke="#000" stroke-width="1.0" stroke-linejoin="round" />
<ellipse cx="847.5" cy="312.25" rx="6" ry="3.6" fill="url(#mHole)" stroke="#000" stroke-width="1.0"/>
<polyline points="846.25,320.0 857.5,315.0 865.0,318.12" fill="none" stroke="#000" stroke-width="1.0" stroke-linejoin="round" stroke-linecap="round"/>
<polygon points="878.75,326.88 903.12,311.88 903.25,322.75 889.5,330.25 880.62,327.5" fill="#434343" stroke="#000" stroke-width="1.0" stroke-linejoin="round" />
<polygon points="856.25,315.0 881.25,299.38 903.12,311.88 878.75,326.88" fill="#b0b0b0" stroke="#000" stroke-width="1.0" stroke-linejoin="round" />
<path d="M871.08,315.152 L887.32,306.152 A6.0,3.7199999999999998 0 0 1 895.12,311.546 L878.88,320.546 A6.0,3.7199999999999998 0 0 1 871.08,315.152 Z" fill="#434343" stroke="#000" stroke-width="1.0" stroke-linejoin="round"/>
<path d="M887.32,306.152 A6.0,3.7199999999999998 0 0 1 895.12,311.546 L887.32,315.452 Z" fill="url(#mHole)" stroke="#000" stroke-width="1.0" stroke-linejoin="round"/>
<polygon points="847.5,322.5 1171,494.1 1173.6,496.5 1174,502.1 1169.6,504.3 1149.2,524 1141,519.055 830,338.75" fill="#c7c7c7" stroke="#000" stroke-width="1.0" stroke-linejoin="round" />
<polygon points="829.61,331.26 832.44,333.78 829.61,339.13" fill="#a8a8a8" stroke="#000" stroke-width="1.0" stroke-linejoin="round" />
<polyline points="829.61,331.26 841.57,324.65" fill="none" stroke="#000" stroke-width="1.0" stroke-linejoin="round" stroke-linecap="round"/>
<polygon points="862.5,391.25 885.0,404.75 888.12,407.5 888.12,417.5 862.5,403.12" fill="#989898" stroke="#000" stroke-width="1.0" stroke-linejoin="round" />
<polygon points="885.0,402.25 898.12,398.12 898.12,402.5 887.5,407.75 885.0,405.0" fill="#8c8c8c" stroke="#000" stroke-width="1.0" stroke-linejoin="round" />
<polygon points="887.5,405.0 898.12,400.0 898.12,402.5 887.5,407.75" fill="#434343" stroke="#000" stroke-width="1.0" stroke-linejoin="round" />
<polygon points="823.8,362.8 845.1,350.4 850.2,349.3 854.6,350.4 875.9,365.0 856.8,376.8 827.8,362.1" fill="#9e9e9e" stroke="#000" stroke-width="1.0" stroke-linejoin="round" />
<path d="M854.6,343.4 L878.9,357.3 Q880.8,359.0 880.2,361.0 L878.9,363.2 L875.9,365.0 L854.6,350.4 Z" fill="#a9a9a9" stroke="#000" stroke-width="1.0" stroke-linejoin="round"/>
<polyline points="854.6,350.6 875.9,365.2" fill="none" stroke="#000" stroke-width="1.8" stroke-linejoin="round" stroke-linecap="round"/>
<polygon points="845.1,346.0 846.5,343.2 850.0,342.3 853.9,343.0 854.6,343.4 854.6,350.4 850.2,349.3 845.1,350.4" fill="url(#mCorner)" stroke="#000" stroke-width="1.0" stroke-linejoin="round" />
<polygon points="889.55,400.8 910.85,388.4 915.95,387.3 920.35,388.4 941.65,403.0 922.55,414.8 893.55,400.1" fill="#9e9e9e" stroke="#000" stroke-width="1.0" stroke-linejoin="round" />
<path d="M920.35,381.4 L944.65,395.3 Q946.55,397.0 945.95,399.0 L944.65,401.2 L941.65,403.0 L920.35,388.4 Z" fill="#a9a9a9" stroke="#000" stroke-width="1.0" stroke-linejoin="round"/>
<polyline points="920.35,388.6 941.65,403.2" fill="none" stroke="#000" stroke-width="1.8" stroke-linejoin="round" stroke-linecap="round"/>
<polygon points="910.85,384.0 912.25,381.2 915.75,380.3 919.65,381.0 920.35,381.4 920.35,388.4 915.95,387.3 910.85,388.4" fill="url(#mCorner)" stroke="#000" stroke-width="1.0" stroke-linejoin="round" />
<polygon points="955.3,438.8 976.6,426.4 981.7,425.3 986.1,426.4 1007.4,441.0 988.3,452.8 959.3,438.1" fill="#9e9e9e" stroke="#000" stroke-width="1.0" stroke-linejoin="round" />
<path d="M986.1,419.4 L1010.4,433.3 Q1012.3,435.0 1011.7,437.0 L1010.4,439.2 L1007.4,441.0 L986.1,426.4 Z" fill="#a9a9a9" stroke="#000" stroke-width="1.0" stroke-linejoin="round"/>
<polyline points="986.1,426.6 1007.4,441.2" fill="none" stroke="#000" stroke-width="1.8" stroke-linejoin="round" stroke-linecap="round"/>
<polygon points="976.6,422.0 978.0,419.2 981.5,418.3 985.4,419.0 986.1,419.4 986.1,426.4 981.7,425.3 976.6,426.4" fill="url(#mCorner)" stroke="#000" stroke-width="1.0" stroke-linejoin="round" />
<polygon points="1021.05,476.8 1042.35,464.4 1047.45,463.3 1051.85,464.4 1073.15,479.0 1054.05,490.8 1025.05,476.1" fill="#9e9e9e" stroke="#000" stroke-width="1.0" stroke-linejoin="round" />
<path d="M1051.85,457.4 L1076.15,471.3 Q1078.05,473.0 1077.45,475.0 L1076.15,477.2 L1073.15,479.0 L1051.85,464.4 Z" fill="#a9a9a9" stroke="#000" stroke-width="1.0" stroke-linejoin="round"/>
<polyline points="1051.85,464.6 1073.15,479.2" fill="none" stroke="#000" stroke-width="1.8" stroke-linejoin="round" stroke-linecap="round"/>
<polygon points="1042.35,460.0 1043.75,457.2 1047.25,456.3 1051.15,457.0 1051.85,457.4 1051.85,464.4 1047.45,463.3 1042.35,464.4" fill="url(#mCorner)" stroke="#000" stroke-width="1.0" stroke-linejoin="round" />
<polygon points="1086.8,514.8 1108.1,502.4 1113.2,501.3 1117.6,502.4 1138.9,517.0 1119.8,528.8 1090.8,514.1" fill="#9e9e9e" stroke="#000" stroke-width="1.0" stroke-linejoin="round" />
<path d="M1117.6,495.4 L1141.9,509.3 Q1143.8,511.0 1143.2,513.0 L1141.9,515.2 L1138.9,517.0 L1117.6,502.4 Z" fill="#a9a9a9" stroke="#000" stroke-width="1.0" stroke-linejoin="round"/>
<polyline points="1117.6,502.6 1138.9,517.2" fill="none" stroke="#000" stroke-width="1.8" stroke-linejoin="round" stroke-linecap="round"/>
<polygon points="1108.1,498.0 1109.5,495.2 1113.0,494.3 1116.9,495.0 1117.6,495.4 1117.6,502.4 1113.2,501.3 1108.1,502.4" fill="url(#mCorner)" stroke="#000" stroke-width="1.0" stroke-linejoin="round" />
<polygon points="836.25,360.0 840.0,363.75 840.0,368.12 836.25,366.25" fill="#989898" stroke="#000" stroke-width="1.0" stroke-linejoin="round" />
<path d="M810.6,353.7 L820.8,358.37 L820.8,363.17 L812.1,357.90000000000003 Q810.6,357.3 810.6,355.8 Z" fill="#a9a9a9" stroke="#000" stroke-width="1.0" stroke-linejoin="round"/>
<polygon points="820.8,358.37 824.8,358.17 824.8,362.97 820.8,363.17" fill="#858585" stroke="#000" stroke-width="1.0" stroke-linejoin="round" />
<polygon points="824.8,358.17 845.8,345.88 845.8,350.68 824.8,362.97" fill="#434343" stroke="#000" stroke-width="1.0" stroke-linejoin="round" />
<path d="M811.8000000000001,351.9 L831.6,340.21 L845.8,345.88 L824.8,358.17 L820.8,358.37 L810.6,353.7 Z" fill="#b0b0b0" stroke="#000" stroke-width="1.0" stroke-linejoin="round"/>
<path d="M856.9,379.3 L885.0,394.27 L885.0,399.07 L858.4,383.50000000000006 Q856.9,382.90000000000003 856.9,381.40000000000003 Z" fill="#a9a9a9" stroke="#000" stroke-width="1.0" stroke-linejoin="round"/>
<polygon points="885.0,394.27 889.0,394.07 889.0,398.87 885.0,399.07" fill="#858585" stroke="#000" stroke-width="1.0" stroke-linejoin="round" />
<polygon points="889.0,394.07 910.6,381.43 910.6,386.23 889.0,398.87" fill="#434343" stroke="#000" stroke-width="1.0" stroke-linejoin="round" />
<path d="M858.1,377.5 L878.5,365.46 L910.6,381.43 L889.0,394.07 L885.0,394.27 L856.9,379.3 Z" fill="#b0b0b0" stroke="#000" stroke-width="1.0" stroke-linejoin="round"/>
<path d="M921.25,418.09999999999997 L929.25,421.5 L929.25,426.3 L922.75,422.3 Q921.25,421.7 921.25,420.2 Z" fill="#a9a9a9" stroke="#000" stroke-width="1.0" stroke-linejoin="round"/>
<polygon points="929.25,421.5 933.25,421.3 933.25,426.1 929.25,426.3" fill="#858585" stroke="#000" stroke-width="1.0" stroke-linejoin="round" />
<polygon points="933.25,421.3 955.25,408.43 955.25,413.23 933.25,426.1" fill="#434343" stroke="#000" stroke-width="1.0" stroke-linejoin="round" />
<path d="M922.45,416.29999999999995 L943.25,404.03 L955.25,408.43 L933.25,421.3 L929.25,421.5 L921.25,418.09999999999997 Z" fill="#b0b0b0" stroke="#000" stroke-width="1.0" stroke-linejoin="round"/>
<path d="M941.9,429.95 L950.9,433.93 L950.9,438.73 L943.4,434.15000000000003 Q941.9,433.55 941.9,432.05 Z" fill="#a9a9a9" stroke="#000" stroke-width="1.0" stroke-linejoin="round"/>
<polygon points="950.9,433.93 954.9,433.73 954.9,438.53000000000003 950.9,438.73" fill="#858585" stroke="#000" stroke-width="1.0" stroke-linejoin="round" />
<polygon points="954.9,433.73 975.4,421.74 975.4,426.54 954.9,438.53000000000003" fill="#434343" stroke="#000" stroke-width="1.0" stroke-linejoin="round" />
<path d="M943.1,428.15 L962.4,416.76 L975.4,421.74 L954.9,433.73 L950.9,433.93 L941.9,429.95 Z" fill="#b0b0b0" stroke="#000" stroke-width="1.0" stroke-linejoin="round"/>
<path d="M987.7,454.3 L1016.4,469.62 L1016.4,474.42 L989.2,458.50000000000006 Q987.7,457.90000000000003 987.7,456.40000000000003 Z" fill="#a9a9a9" stroke="#000" stroke-width="1.0" stroke-linejoin="round"/>
<polygon points="1016.4,469.62 1020.4,469.42 1020.4,474.22 1016.4,474.42" fill="#858585" stroke="#000" stroke-width="1.0" stroke-linejoin="round" />
<polygon points="1020.4,469.42 1042.0,456.78 1042.0,461.58 1020.4,474.22" fill="#434343" stroke="#000" stroke-width="1.0" stroke-linejoin="round" />
<path d="M988.9000000000001,452.5 L1009.3,440.46 L1042.0,456.78 L1020.4,469.42 L1016.4,469.62 L987.7,454.3 Z" fill="#b0b0b0" stroke="#000" stroke-width="1.0" stroke-linejoin="round"/>
<path d="M1053.1,496.2 L1081.2,511.17 L1081.2,515.97 L1054.6,500.40000000000003 Q1053.1,499.8 1053.1,498.3 Z" fill="#a9a9a9" stroke="#000" stroke-width="1.0" stroke-linejoin="round"/>
<polygon points="1081.2,511.17 1085.2,510.97 1085.2,515.77 1081.2,515.97" fill="#858585" stroke="#000" stroke-width="1.0" stroke-linejoin="round" />
<polygon points="1085.2,510.97 1106.8,498.33 1106.8,503.13 1085.2,515.77" fill="#434343" stroke="#000" stroke-width="1.0" stroke-linejoin="round" />
<path d="M1054.3,494.4 L1074.7,482.36 L1106.8,498.33 L1085.2,510.97 L1081.2,511.17 L1053.1,496.2 Z" fill="#b0b0b0" stroke="#000" stroke-width="1.0" stroke-linejoin="round"/>
<polygon points="1028.75,301.25 1050.0,288.75 1050.0,293.12 1032.75,303.75" fill="#434343" stroke="#000" stroke-width="1.0" stroke-linejoin="round" />
<polyline points="950.0,276.25 1004.38,306.62" fill="none" stroke="#000" stroke-width="1.0" stroke-linejoin="round" stroke-linecap="round"/>
<polyline points="1050.0,293.12 1071.25,306.25" fill="none" stroke="#000" stroke-width="1.0" stroke-linejoin="round" stroke-linecap="round"/>
<polyline points="1076.25,305.0 1042.5,324.38" fill="none" stroke="#000" stroke-width="1.0" stroke-linejoin="round" stroke-linecap="round"/>
<polyline points="1047.5,329.38 1061.88,321.0 1064.38,320.25 1066.88,321.25 1090.0,335.0" fill="none" stroke="#000" stroke-width="1.0" stroke-linejoin="round" stroke-linecap="round"/>
<polygon points="1028.75,320.62 1041.25,313.75 1041.25,325.0 1036.25,325.62" fill="url(#mCyl)" stroke="#000" stroke-width="1.0" stroke-linejoin="round" />
<polygon points="1028.12,318.12 1041.25,310.62 1041.25,313.75 1028.12,320.62" fill="#434343" stroke="#000" stroke-width="1.0" stroke-linejoin="round" />
<polyline points="1028.12,319.12 1041.25,311.88" fill="none" stroke="#999" stroke-width="0.8" stroke-linejoin="round" stroke-linecap="round"/>
<polygon points="1001.88,303.12 1015.0,295.0 1041.25,310.62 1028.12,318.12" fill="#b0b0b0" stroke="#000" stroke-width="1.0" stroke-linejoin="round" />
<path d="M920.0,331.88 L938.75,344.0 L938.75,345.0 Q928.75,351.25 920.0,345.62 Z" fill="#989898" stroke="#000" stroke-width="1.0" stroke-linejoin="round"/>
<polyline points="938.75,344.0 1005.0,306.62" fill="none" stroke="#000" stroke-width="1.0" stroke-linejoin="round" stroke-linecap="round"/>
<polyline points="920.0,331.5 984.38,296.0 986.88,295.38 989.38,296.5" fill="none" stroke="#000" stroke-width="1.0" stroke-linejoin="round" stroke-linecap="round"/>
<polygon points="966.25,325.0 971.88,325.0 971.88,327.75 966.25,328.75" fill="#434343" stroke="#000" stroke-width="1.0" stroke-linejoin="round" />
<polyline points="1004.38,306.62 1061.25,340.0" fill="none" stroke="#000" stroke-width="1.0" stroke-linejoin="round" stroke-linecap="round"/>
<polygon points="1061.25,340.0 1061.25,345.62 1003.15,381.73 1003.15,385.2 1001.89,387.09 991.18,392.76 984.88,394.33 978.58,397.17 967.87,407.87 959.06,412.28 932.5,426.5 932.5,423.12 952.76,410.39 969.76,392.76" fill="#434343" stroke="#000" stroke-width="1.0" stroke-linejoin="round" />
<path d="M980.01,346.8256 L1013.76,330.2056 A6.8,4.216 0 0 1 1022.6,336.3188 L988.85,352.9388 A6.8,4.216 0 0 1 980.01,346.8256 Z" fill="#434343" stroke="#000" stroke-width="1.0" stroke-linejoin="round"/>
<path d="M1013.76,330.2056 A6.8,4.216 0 0 1 1022.6,336.3188 L1013.76,340.7456 Z" fill="url(#mHole)" stroke="#000" stroke-width="1.0" stroke-linejoin="round"/>
<polyline points="1126.25,341.25 1135.0,346.5 1136.5,348.75 1136.5,361.25 1151.25,370.0 1151.25,391.25" fill="none" stroke="#000" stroke-width="1.0" stroke-linejoin="round" stroke-linecap="round"/>
<polygon points="1125.0,355.62 1136.0,350.0 1136.0,361.0" fill="#434343" stroke="#000" stroke-width="1.0" stroke-linejoin="round" />
<polygon points="1135.0,381.88 1151.25,371.88 1151.25,390.62" fill="#434343" stroke="#000" stroke-width="1.0" stroke-linejoin="round" />
<polyline points="1087.5,356.25 1130.0,381.25 1135.0,381.88" fill="none" stroke="#000" stroke-width="1.0" stroke-linejoin="round" stroke-linecap="round"/>
<polyline points="1062.5,346.0 1134.38,383.12 1193.75,416.25" fill="none" stroke="#000" stroke-width="1.0" stroke-linejoin="round" stroke-linecap="round"/>
<path d="M1086.3,341.9 L1086.3,350.65 A18.7,10.6 0 0 0 1123.7,350.65 L1123.7,341.9 Z" fill="url(#mCyl)" stroke="#000" stroke-width="1.0" stroke-linejoin="round"/>
<ellipse cx="1105" cy="341.9" rx="18.7" ry="10.6" fill="#b0b0b0" stroke="#000" stroke-width="1.0"/>
<ellipse cx="1105" cy="341.9" rx="8.1" ry="5" fill="url(#mHole)" stroke="#000" stroke-width="1.0"/>
<path d="M1003.12,382.5 L1070.0,420.62 Q1058.75,427.5 1047.5,421.88 L999.37,394.33 L991.18,392.88 L1001.89,387.09 L1003.15,385.2 Z" fill="#9c9c9c" stroke="#000" stroke-width="1.0" stroke-linejoin="round"/>
<polyline points="978.58,397.17 984.88,394.33 991.18,392.88 999.37,394.33" fill="none" stroke="#000" stroke-width="1.0" stroke-linejoin="round" stroke-linecap="round"/>
<polyline points="1003.12,381.88 1062.5,346.0" fill="none" stroke="#000" stroke-width="1.0" stroke-linejoin="round" stroke-linecap="round"/>
<ellipse cx="1078.5" cy="390.62" rx="4.2" ry="2.6" fill="url(#mHole)" stroke="#000" stroke-width="1.0"/>
<polyline points="1070.0,420.62 1135.0,383.12" fill="none" stroke="#000" stroke-width="1.0" stroke-linejoin="round" stroke-linecap="round"/>
<path d="M1193.75,416.25 L1193.75,421.88 L1134.38,456.88 L1134.38,463.12 L1125.62,467.5 Q1118.75,462.5 1122.5,456.25 L1126.25,453.12 Z" fill="#434343" stroke="#000" stroke-width="1.0" stroke-linejoin="round"/>
<path d="M1111.7,422.272 L1145.45,405.402 A6.0,3.7199999999999998 0 0 1 1153.25,410.796 L1119.5,427.666 A6.0,3.7199999999999998 0 0 1 1111.7,422.272 Z" fill="#434343" stroke="#000" stroke-width="1.0" stroke-linejoin="round"/>
<path d="M1145.45,405.402 A6.0,3.7199999999999998 0 0 1 1153.25,410.796 L1145.45,414.702 Z" fill="url(#mHole)" stroke="#000" stroke-width="1.0" stroke-linejoin="round"/>
<polygon points="1263.12,436.25 1284.38,425.0 1284.38,429.38 1267.5,439.0" fill="#434343" stroke="#000" stroke-width="1.0" stroke-linejoin="round" />
<polyline points="1285.62,430.0 1305.0,441.25" fill="none" stroke="#000" stroke-width="1.0" stroke-linejoin="round" stroke-linecap="round"/>
<polyline points="1311.25,440.0 1277.5,459.0" fill="none" stroke="#000" stroke-width="1.0" stroke-linejoin="round" stroke-linecap="round"/>
<polyline points="1193.75,416.25 1201.25,420.0 1236.25,439.0" fill="none" stroke="#000" stroke-width="1.0" stroke-linejoin="round" stroke-linecap="round"/>
<polygon points="1251.88,465.0 1276.25,453.12 1276.25,458.75 1251.88,473.12" fill="#434343" stroke="#000" stroke-width="1.0" stroke-linejoin="round" />
<polygon points="1251.88,460.0 1276.25,448.12 1276.25,450.0 1251.88,462.5" fill="#cfcfcf" stroke="#000" stroke-width="1.0" stroke-linejoin="round" />
<polygon points="1251.88,462.5 1276.25,450.0 1276.25,455.0 1251.88,468.12" fill="#434343" stroke="#000" stroke-width="1.0" stroke-linejoin="round" />
<polyline points="1251.88,470.0 1276.25,457.75" fill="none" stroke="#bbb" stroke-width="1.0" stroke-linejoin="round" stroke-linecap="round"/>
<polygon points="1236.25,439.0 1250.0,431.25 1276.25,446.5 1276.25,448.12 1251.88,460.25 1251.88,449.38 1243.12,444.38" fill="#b0b0b0" stroke="#000" stroke-width="1.0" stroke-linejoin="round" />
<polygon points="1243.12,444.38 1251.88,449.38 1251.88,477.5 1243.12,482.5" fill="#434343" stroke="#000" stroke-width="1.0" stroke-linejoin="round" />
<polygon points="1135.62,459.38 1178.12,482.5 1178.34,507.19 1174.33,505.73 1174.33,497.35 1171.04,494.06 1130.0,470.62 1130.0,462.5" fill="#9a9a9a" stroke="#000" stroke-width="1.0" stroke-linejoin="round" />
<polygon points="1178.12,482.5 1182.5,482.5 1182.5,506.88 1178.12,506.88" fill="#8a8a8a" stroke="#000" stroke-width="1.0" stroke-linejoin="round" />
<polygon points="1182.5,482.5 1243.12,448.12 1243.12,472.5 1223.75,483.12 1222.5,492.5 1197.5,506.88 1182.5,506.88" fill="#434343" stroke="#000" stroke-width="1.0" stroke-linejoin="round" />
<polygon points="1135.62,458.75 1201.25,420.0 1243.12,444.62 1243.12,448.12 1182.5,482.5 1178.12,482.5" fill="#b0b0b0" stroke="#000" stroke-width="1.0" stroke-linejoin="round" />
<ellipse cx="1188.12" cy="453.75" rx="4.2" ry="2.6" fill="url(#mHole)" stroke="#000" stroke-width="1.0"/>
<polygon points="1222.5,483.12 1243.12,472.5 1243.12,492.5 1228.75,501.25 1228.75,488.12 1222.5,492.5" fill="#434343" stroke="#000" stroke-width="1.0" stroke-linejoin="round" />
<polygon points="1182.5,506.88 1197.5,506.88 1222.5,493.12 1228.75,488.12 1228.75,501.25 1185.0,526.25 1171.25,532.5 1170.0,512.5 1174.38,507.5" fill="#434343" stroke="#000" stroke-width="1.0" stroke-linejoin="round" />
<polyline points="1197.5,495.0 1222.5,481.25 1222.5,492.5" fill="none" stroke="#000" stroke-width="1.0" stroke-linejoin="round" stroke-linecap="round"/>
<polyline points="1197.5,495.0 1197.5,506.88" fill="none" stroke="#000" stroke-width="1.0" stroke-linejoin="round" stroke-linecap="round"/>
<polygon points="1186.25,506.25 1193.12,502.5 1198.75,506.25 1196.88,511.25" fill="#dcdcdc" stroke="#000" stroke-width="1.0" stroke-linejoin="round" />
<polyline points="1185.0,516.25 1185.0,526.25" fill="none" stroke="#000" stroke-width="1.0" stroke-linejoin="round" stroke-linecap="round"/>
<ellipse cx="1275.62" cy="476.88" rx="15.6" ry="9.2" fill="url(#mHole)" stroke="#000" stroke-width="1.0"/>
<path d="M1265.9479999999999,481.94 Q1275.62,477.8 1285.292,481.94 Q1275.62,488.38 1265.9479999999999,481.94 Z" fill="#b4b4b4" stroke="#000" stroke-width="1.0" stroke-linejoin="round"/>
<ellipse cx="1277.5" cy="498.75" rx="6.5" ry="4" fill="url(#mHole)" stroke="#000" stroke-width="1.0"/>
<ellipse cx="1163.75" cy="541.0" rx="15.6" ry="9.2" fill="url(#mHole)" stroke="#000" stroke-width="1.0"/>
<path d="M1154.078,546.06 Q1163.75,541.92 1173.422,546.06 Q1163.75,552.5 1154.078,546.06 Z" fill="#b4b4b4" stroke="#000" stroke-width="1.0" stroke-linejoin="round"/>
<ellipse cx="1201.25" cy="542.5" rx="6.8" ry="4.2" fill="url(#mHole)" stroke="#000" stroke-width="1.0"/>
<ellipse cx="1130.62" cy="514.75" rx="7.5" ry="4.6" fill="url(#mHole)" stroke="#000" stroke-width="1.0"/>
<polygon points="1096.25,520.0 1098.75,517.75 1118.12,529.0 1118.12,536.25 1122.5,540.0 1122.5,553.12 1096.25,538.12" fill="#989898" stroke="#000" stroke-width="1.0" stroke-linejoin="round" />
<polygon points="1118.75,530.25 1127.5,536.25 1127.5,540.62 1118.75,535.25" fill="#a9a9a9" stroke="#000" stroke-width="1.0" stroke-linejoin="round" />
<polygon points="1127.5,536.25 1130.0,536.5 1130.0,540.62 1127.5,540.62" fill="#858585" stroke="#000" stroke-width="1.0" stroke-linejoin="round" />
<polygon points="1118.75,530.0 1141.25,516.88 1150.0,524.0 1130.0,536.5 1127.5,536.25" fill="#b0b0b0" stroke="#000" stroke-width="1.0" stroke-linejoin="round" />
<polygon points="1173.96,502.08 1173.96,513.75 1171.04,517.4 1129.48,540.0 1129.48,535.99 1149.17,523.96 1169.58,504.27" fill="#434343" stroke="#000" stroke-width="1.0" stroke-linejoin="round" />
<polyline points="1118.12,529.0 1141.25,516.25" fill="none" stroke="#000" stroke-width="1.0" stroke-linejoin="round" stroke-linecap="round"/>
</svg>
<div class="vbtn" style="left:4px;top:4px"><svg width="22" height="22" viewBox="0.5 0.5 23 23" style="position:absolute;left:0;top:0"><rect x="3" y="4" width="18" height="4" fill="#4a6498"/><rect x="3" y="10" width="18" height="4" fill="#4a6498"/><rect x="3" y="16" width="18" height="4" fill="#4a6498"/></svg></div>
<div class="vbtn" style="left:32px;top:4px"><svg width="22" height="22" viewBox="0.5 0.5 23 23" style="position:absolute;left:0;top:0"><rect x="5.5" y="6" width="13" height="12" fill="url(#gDoc)" stroke="#555" stroke-width="1"/><rect x="2" y="2.5" width="4" height="4" fill="#2fae22" stroke="#1b7a14" stroke-width="0.4"/><path d="M2.8 3.3 L5.2 5.7 M5.2 3.3 L2.8 5.7" stroke="#b6f0a8" stroke-width="0.6"/><rect x="18" y="2.5" width="4" height="4" fill="#2fae22" stroke="#1b7a14" stroke-width="0.4"/><path d="M18.8 3.3 L21.2 5.7 M21.2 3.3 L18.8 5.7" stroke="#b6f0a8" stroke-width="0.6"/><rect x="2" y="17.5" width="4" height="4" fill="#2fae22" stroke="#1b7a14" stroke-width="0.4"/><path d="M2.8 18.3 L5.2 20.7 M5.2 18.3 L2.8 20.7" stroke="#b6f0a8" stroke-width="0.6"/><rect x="18" y="17.5" width="4" height="4" fill="#2fae22" stroke="#1b7a14" stroke-width="0.4"/><path d="M18.8 18.3 L21.2 20.7 M21.2 18.3 L18.8 20.7" stroke="#b6f0a8" stroke-width="0.6"/></svg></div>
<div class="vbtn" style="left:60px;top:4px"><svg width="22" height="22" viewBox="0.5 0.5 23 23" style="position:absolute;left:0;top:0"><path d="M3 6 H8 M2 9 H7 M3 12 H8" stroke="#c9d2e6" stroke-width="1.4"/><g transform="translate(4,2) scale(0.95)"><path d="M6.5 13.5 L1.5 19" stroke="#9b9b9b" stroke-width="3.4" stroke-linecap="round"/><path d="M6.5 13.5 L1.5 19" stroke="#e4e4e4" stroke-width="1.6" stroke-linecap="round"/><circle cx="10.5" cy="9" r="6.3" fill="url(#gLens)" stroke="#7d9cc4" stroke-width="1.5"/></g></svg></div>
<div class="vbtn" style="left:88px;top:4px"><svg width="22" height="22" viewBox="0.5 0.5 23 23" style="position:absolute;left:0;top:0"><path d="M2 17 L12 12 L22 17 L12 22 Z" fill="#9aa0b8" stroke="#b8bccc" stroke-width="0.5"/><path d="M11 16 V5" stroke="#1e5df0" stroke-width="1.8"/><path d="M11 1.5 L8.3 6.5 H13.7 Z" fill="#1e5df0"/><path d="M11 16 L17 12" stroke="#2bb32a" stroke-width="1.8"/><path d="M19.5 10.3 L14.4 11 L16.8 14.4 Z" fill="#2bb32a"/><path d="M11 16 L17 20" stroke="#e0262d" stroke-width="1.8"/><path d="M19.5 21.6 L17.3 16.8 L14.8 20.4 Z" fill="#e0262d"/><circle cx="11" cy="16" r="1.8" fill="#e8e8e8" stroke="#777" stroke-width="0.5"/></svg></div>
<div class="vbtn" style="left:116px;top:4px"><svg width="22" height="22" viewBox="0.5 0.5 23 23" style="position:absolute;left:0;top:0"><path d="M12 2.8 L21.3 6.7 V16.9 L12 21.6 L2.7 16.9 V6.7 Z M2.7 6.7 L12 9.9 L21.3 6.7 M12 9.9 V21.6 M12 2.8 V13.2 M2.7 16.9 L12 13.2 L21.3 16.9" fill="none" stroke="#050505" stroke-width="1.45" stroke-linejoin="round"/><polygon points="12,2.8 21.3,6.7 12,9.9 2.7,6.7" fill="#22c81e" stroke="#050505" stroke-width="1.45" stroke-linejoin="round"/></svg></div>
<div class="vbtn" style="left:144px;top:4px"><svg width="22" height="22" viewBox="0.5 0.5 23 23" style="position:absolute;left:0;top:0"><polygon points="2.7,16.9 12,21.6 21.3,16.9 12,13.2" fill="#22c81e"/><path d="M12 2.8 L21.3 6.7 V16.9 L12 21.6 L2.7 16.9 V6.7 Z M2.7 6.7 L12 9.9 L21.3 6.7 M12 9.9 V21.6 M12 2.8 V13.2 M2.7 16.9 L12 13.2 L21.3 16.9" fill="none" stroke="#050505" stroke-width="1.45" stroke-linejoin="round"/></svg></div>
<div class="vbtn" style="left:172px;top:4px"><svg width="22" height="22" viewBox="0.5 0.5 23 23" style="position:absolute;left:0;top:0"><polygon points="2.7,6.7 12,2.8 12,13.2 2.7,16.9" fill="#22c81e"/><path d="M12 2.8 L21.3 6.7 V16.9 L12 21.6 L2.7 16.9 V6.7 Z M2.7 6.7 L12 9.9 L21.3 6.7 M12 9.9 V21.6 M12 2.8 V13.2 M2.7 16.9 L12 13.2 L21.3 16.9" fill="none" stroke="#050505" stroke-width="1.45" stroke-linejoin="round"/></svg></div>
<div class="vbtn" style="left:200px;top:4px"><svg width="22" height="22" viewBox="0.5 0.5 23 23" style="position:absolute;left:0;top:0"><path d="M12 2.8 L21.3 6.7 V16.9 L12 21.6 L2.7 16.9 V6.7 Z M2.7 6.7 L12 9.9 L21.3 6.7 M12 9.9 V21.6 M12 2.8 V13.2 M2.7 16.9 L12 13.2 L21.3 16.9" fill="none" stroke="#050505" stroke-width="1.45" stroke-linejoin="round"/><polygon points="12,9.9 21.3,6.7 21.3,16.9 12,21.6" fill="#22c81e" stroke="#050505" stroke-width="1.45" stroke-linejoin="round"/></svg></div>
<div class="vbtn" style="left:228px;top:4px"><svg width="22" height="22" viewBox="0.5 0.5 23 23" style="position:absolute;left:0;top:0"><path d="M12 2.8 L21.3 6.7 V16.9 L12 21.6 L2.7 16.9 V6.7 Z M2.7 6.7 L12 9.9 L21.3 6.7 M12 9.9 V21.6 M12 2.8 V13.2 M2.7 16.9 L12 13.2 L21.3 16.9" fill="none" stroke="#050505" stroke-width="1.45" stroke-linejoin="round"/><polygon points="2.7,6.7 12,9.9 12,21.6 2.7,16.9" fill="#22c81e" stroke="#050505" stroke-width="1.45" stroke-linejoin="round"/></svg></div>
<div class="vbtn" style="left:256px;top:4px"><svg width="22" height="22" viewBox="0.5 0.5 23 23" style="position:absolute;left:0;top:0"><polygon points="12,2.8 21.3,6.7 21.3,16.9 12,13.2" fill="#22c81e"/><path d="M12 2.8 L21.3 6.7 V16.9 L12 21.6 L2.7 16.9 V6.7 Z M2.7 6.7 L12 9.9 L21.3 6.7 M12 9.9 V21.6 M12 2.8 V13.2 M2.7 16.9 L12 13.2 L21.3 16.9" fill="none" stroke="#050505" stroke-width="1.45" stroke-linejoin="round"/></svg></div>
<div class="vbtn" style="left:284px;top:4px"><svg width="22" height="22" viewBox="0.5 0.5 23 23" style="position:absolute;left:0;top:0"><polygon points="12,2.8 21.3,6.7 12,9.9 2.7,6.7" fill="#7be86a"/><polygon points="2.7,6.7 12,9.9 12,21.6 2.7,16.9" fill="#22c81e"/><polygon points="12,9.9 21.3,6.7 21.3,16.9 12,21.6" fill="#128c12"/><path d="M12 2.8 L21.3 6.7 V16.9 L12 21.6 L2.7 16.9 V6.7 Z M2.7 6.7 L12 9.9 L21.3 6.7 M12 9.9 V21.6" fill="none" stroke="#0f7a10" stroke-width="0.9"/></svg></div>
<div class="vbtn" style="left:4px;top:32px"><svg width="22" height="22" viewBox="0.5 0.5 23 23" style="position:absolute;left:0;top:0"><path d="M7 5.5 V18.5 A5 2.3 0 0 0 17 18.5 V5.5" fill="none" stroke="#222" stroke-width="0.9"/><ellipse cx="12" cy="5.5" rx="5" ry="2.3" fill="none" stroke="#222" stroke-width="0.9"/><path d="M7 18.5 A5 2.3 0 0 1 17 18.5" fill="none" stroke="#222" stroke-width="0.63"/></svg></div>
<div class="vbtn" style="left:4px;top:60px"><svg width="22" height="22" viewBox="0.5 0.5 23 23" style="position:absolute;left:0;top:0"><path d="M7 5.5 V18.5 A5 2.3 0 0 0 17 18.5 V5.5" fill="none" stroke="#222" stroke-width="0.9"/><ellipse cx="12" cy="5.5" rx="5" ry="2.3" fill="none" stroke="#222" stroke-width="0.9"/></svg></div>
<div class="vbtn sel" style="left:4px;top:88px"><svg width="22" height="22" viewBox="0.5 0.5 23 23" style="position:absolute;left:0;top:0"><path d="M7 5.5 V18.5 A5 2.3 0 0 0 17 18.5 V5.5 Z" fill="url(#gCyl)" stroke="#1b2c5c" stroke-width="0.8"/><ellipse cx="12" cy="5.5" rx="5" ry="2.3" fill="#5f86d2" stroke="#1b2c5c" stroke-width="0.8"/></svg></div>
<div class="vbtn" style="left:4px;top:116px"><svg width="22" height="22" viewBox="0.5 0.5 23 23" style="position:absolute;left:0;top:0"><path d="M7 5.5 V18.5 A5 2.3 0 0 0 17 18.5 V5.5 Z" fill="url(#gCylL)" stroke="#6f7c9c" stroke-width="0.8"/><ellipse cx="12" cy="5.5" rx="5" ry="2.3" fill="#eef3fd" stroke="#6f7c9c" stroke-width="0.8"/></svg></div>
<div class="vbtn" style="left:4px;top:144px"><svg width="22" height="22" viewBox="0.5 0.5 23 23" style="position:absolute;left:0;top:0"><path d="M7 5.5 V18.5 A5 2.3 0 0 0 17 18.5 V5.5" fill="none" stroke="#222" stroke-width="0.8"/><ellipse cx="12" cy="5.5" rx="5" ry="2.3" fill="none" stroke="#222" stroke-width="0.8"/><path d="M9 7.5 L11 20.5 L12.5 7.8 L15 20.3 L16 7 M8 19 L10 7.6 M13.5 20.6 L14.5 7.6 M7 12 L12 13.5 L17 11" fill="none" stroke="#222" stroke-width="0.6"/></svg></div>
<svg class="abs" style="left:0;top:0" width="1860" height="892" viewBox="60 109 1860 892">
<defs><linearGradient id="wmG" x1="0" y1="0" x2="0" y2="1"><stop offset="0" stop-color="#f9a21c"/><stop offset="1" stop-color="#ee6a12"/></linearGradient></defs>
<circle cx="904" cy="138" r="22.2" fill="none" stroke="#c2c2c2" stroke-width="3"/>
<circle cx="962" cy="138" r="22.2" fill="none" stroke="#cc0d0d" stroke-width="3"/>
<circle cx="1019" cy="138" r="22.2" fill="none" stroke="#c2c2c2" stroke-width="3"/>
<circle cx="1077" cy="138" r="22.2" fill="none" stroke="#c2c2c2" stroke-width="3"/>
<path d="M893.5 139.5 L900.5 146 L914 131" fill="none" stroke="#c2c2c2" stroke-width="3.2" stroke-linecap="round" stroke-linejoin="round"/>
<path d="M954.5 130.5 L969.5 145.5 M969.5 130.5 L954.5 145.5" fill="none" stroke="#cc0d0d" stroke-width="3.2" stroke-linecap="round"/>
<path d="M1023.5 128 L1012.5 138 L1023.5 148" fill="none" stroke="#c2c2c2" stroke-width="3.2" stroke-linecap="round" stroke-linejoin="round"/>
<path d="M1072.5 128 L1083.5 138 L1072.5 148" fill="none" stroke="#c2c2c2" stroke-width="3.2" stroke-linecap="round" stroke-linejoin="round"/>
<g>
<polygon points="121,921 138,911 138,950 121,941" fill="#8f9cc0" fill-opacity="0.55" stroke="#dcdcdc" stroke-width="1"/>
<polygon points="121,941 138,931 155,942 138,952" fill="#9aa46a" fill-opacity="0.75"/>
<polyline points="138,931 155,942 140,951" fill="none" stroke="#f4ee1a" stroke-width="1.2"/>
<polyline points="121,921 138,931 138,950" fill="none" stroke="#e0e0e0" stroke-width="1"/>
<line x1="119.5" y1="941" x2="119.5" y2="888" stroke="#10a8b8" stroke-width="2"/><polygon points="119.5,880 115.5,890 123.5,890" fill="#17d8e6"/>
<line x1="121" y1="940" x2="148" y2="925" stroke="#18c018" stroke-width="2.4"/><polygon points="155,921 146,922.5 149.5,929" fill="#18c018"/>
<line x1="121" y1="942" x2="138" y2="951" stroke="#e60a0a" stroke-width="2.6"/><polygon points="145,956 139.5,948 135,955.5" fill="#e60a0a"/>
<circle cx="119.5" cy="941.5" r="3.6" fill="#6a6a6a"/><circle cx="118.5" cy="940.3" r="1.4" fill="#9a9a9a"/>
<text x="119.5" y="878.5" font-family="Liberation Sans, sans-serif" font-size="12" fill="#d8d8d8" text-anchor="middle">Z</text>
<text x="159.5" y="923" font-family="Liberation Sans, sans-serif" font-size="10.5" fill="#e60a0a" text-anchor="middle">Y</text>
<text x="149" y="964" font-family="Liberation Sans, sans-serif" font-size="12" fill="#d8d8d8" text-anchor="middle">X</text>
</g>
<g fill="url(#wmG)" stroke="none">
<polygon points="891.25,516.8 893.2,518.36 893.2,536.72 904.53,538.28 904.53,539.84 891.25,539.84"/>
<polygon points="894.53,511.72 896.72,513.67 896.72,535.55 906.09,537.89 905.47,538.67 894.53,536.72"/>
<polygon points="899.22,508.2 901.8,510.55 901.8,533.59 907.66,537.5 906.88,538.28 899.22,534.38"/>
<polygon points="936.17,516.8 934.22,518.36 934.22,536.72 922.89,538.28 922.89,539.84 936.17,539.84"/>
<polygon points="932.5,511.72 930.16,513.67 930.16,535.55 920.94,537.89 921.56,538.67 932.5,536.72"/>
<polygon points="927.81,508.2 925.0,510.55 925.0,533.59 919.38,537.5 920.16,538.28 927.81,534.38"/>
<path d="M913.91,510.55 C902.97,511.72 901.8,523.44 906.09,525.78 C906.09,519.53 909.22,517.19 911.95,517.58 L911.95,537.5 L915.86,537.5 L915.86,529.69 C921.72,528.12 924.06,523.44 920.55,518.75 C920.94,523.44 918.59,526.56 915.08,527.73 L911.17,516.8 Z" fill="#f7a11c"/>
<rect x="908.44" y="537.34" width="10.15625" height="1.875" fill="#f2811c"/>
</g>
<text x="947" y="529.3" font-family="Liberation Sans, Noto Sans CJK SC, sans-serif" font-weight="700" font-size="16.4" fill="#f6901e" textLength="82" lengthAdjust="spacingAndGlyphs">智造资料网</text>
<text x="947" y="538" font-family="Liberation Sans, sans-serif" font-weight="bold" font-size="4.9" fill="#f6901e" textLength="82" lengthAdjust="spacingAndGlyphs">INTELLIGENT MANUFACTURING DATA</text>
</svg>
</div>
<div id="status"><div class="ln"></div>
<div class="st" style="left:6px;top:3px;font-weight:bold">缩放</div>
<div class="grip-v" style="left:1337px;top:3px;height:14px"></div>
<div class="abs" style="left:1341px;top:1px;width:130px;height:18px;background:#fff"></div>
<svg class="abs" style="left:1458px;top:3px" width="14" height="14" viewBox="0 0 14 14"><circle cx="8.5" cy="5.5" r="3.6" fill="#dfeaf8" stroke="#4a78b8" stroke-width="1.3"/><path d="M6 8 L1.5 12.5" stroke="#4a78b8" stroke-width="1.6" stroke-linecap="round"/></svg>
<div class="grip-v" style="left:1475px;top:3px;height:14px"></div>
<div class="st" style="left:1486px;top:2px;letter-spacing:0.3px">绝对 XY 上视图</div>
<div class="sep" style="left:1592px;top:2px"></div>
<div class="st" style="left:1601px;top:2px;">绝对视图</div>
<div class="grip-v" style="left:1655px;top:3px;height:14px"></div>
<div class="st" style="left:1668px;top:2px;font-weight:bold;font-size:12px">LAYER0</div>
<div class="sep" style="left:1727px;top:2px"></div>
<div class="abs" style="left:1762px;top:4px;width:32.5px;height:11px;background:#3d5c8a"></div>
<div class="abs" style="left:1805px;top:4px;width:32.5px;height:11px;background:#3d5c8a"></div>
<div class="abs" style="left:1848.5px;top:4px;width:32.5px;height:11px;background:#3d5c8a"></div>
<svg class="abs" style="left:1893.5px;top:0.5px" width="16" height="16" viewBox="0 0 16 16"><circle cx="8" cy="8" r="6.6" fill="#1a3fb0" stroke="#0c1f5c" stroke-width="0.8"/><path d="M4 4 C6 2.5 9 3 9.5 5 C9 7 6.5 6.5 6 8.5 C5 10 6.5 11 6 13 C3 11.5 2 7 4 4 Z M10.5 8 C12.5 7 14 8.5 13.5 10.5 C12.5 12.5 10.5 12.5 10 11 C9.6 9.8 9.8 8.6 10.5 8 Z" fill="#28b428"/><circle cx="6" cy="5" r="1.5" fill="#fff" opacity="0.5"/></svg>
<div class="sep" style="left:1133px;top:21px"></div>
<div class="st" style="left:1141px;top:22px;">拴牢</div>
<div class="sep" style="left:1175px;top:21px"></div>
<div class="sep" style="left:1205px;top:21px"></div>
<div class="sep" style="left:1236px;top:21px"></div>
<div class="sep" style="left:1267px;top:21px"></div>
<div class="sep" style="left:1298px;top:21px"></div>
<div class="sep" style="left:1329px;top:21px"></div>
<div class="sep" style="left:1361px;top:21px"></div>
<div class="sep" style="left:1392px;top:21px"></div>
<div class="sep" style="left:1423px;top:21px"></div>
<div class="sep" style="left:1454px;top:21px"></div>
<svg class="abs" style="left:1181px;top:19.5px" width="18" height="18" viewBox="0 0 18 18"><rect x="1" y="1" width="16" height="16" fill="#e8e8ee" stroke="#555" stroke-width="1"/><path d="M4 9 C4 4.5 10 3.5 12 6.5 L13.5 5 L14 10 L9 9.5 L10.6 8 C9.5 6.2 6.3 6.5 6.2 9 Z M14 9.5 C14 14 8 15 6 12 L4.5 13.5 L4 8.5 L9 9 L7.4 10.5 C8.5 12.3 11.7 12 11.8 9.5 Z" fill="#e8606c"/></svg>
<svg class="abs" style="left:1211px;top:19.5px" width="18" height="18" viewBox="0 0 18 18"><path d="M3 3 H9 V8 H3 Z" fill="#9a9a9a"/><path d="M6 5 L14 10 L10.5 10.8 L13 15 L11.5 16 L9 11.8 L6.5 14 Z" fill="#b8b8b8" stroke="#777" stroke-width="0.7"/></svg>
<svg class="abs" style="left:1243px;top:19.5px" width="18" height="18" viewBox="0 0 18 18"><path d="M2 8 L9 3 L16 7 L9 11 Z" fill="#e8b25a" stroke="#9a6a1c" stroke-width="0.6"/><rect x="3" y="9" width="9" height="8" fill="#dfe8f7" stroke="#4a6ab0" stroke-width="0.8"/><path d="M5 11 H10 M5 13 H10 M5 15 H10 M7.5 9.5 V16.5" stroke="#3c62c8" stroke-width="0.9"/></svg>
<svg class="abs" style="left:1274px;top:19.5px" width="18" height="18" viewBox="0 0 18 18"><ellipse cx="9" cy="16.2" rx="5" ry="1.2" fill="#000" opacity="0.25"/><text x="9" y="14" font-size="16" font-weight="bold" font-family="Liberation Sans, sans-serif" text-anchor="middle" fill="#3f78d8" stroke="#1f4fa8" stroke-width="0.4">?</text></svg>
<svg class="abs" style="left:1305px;top:19.5px" width="18" height="18" viewBox="0 0 18 18"><path d="M8 5 L12 3.5 L16 5 V10 L12 12 L8 10 Z" fill="#5f8fd8" stroke="#234a8c" stroke-width="0.6"/><path d="M9 10 L13 8.5 L17 10 V15 L13 17 L9 15 Z" fill="#9cc0ee" stroke="#234a8c" stroke-width="0.6"/><path d="M1 8 L9 11 M1 11.5 L8 11.5 M2 15 L9 12" stroke="#e01c24" stroke-width="1.5"/><path d="M10.5 11.3 L6.5 9 V14 Z" fill="#e01c24"/></svg>
<div class="abs" style="left:1336px;top:19px;width:18px;height:18px;background:#ffe17a"></div>
<svg class="abs" style="left:1336px;top:19.5px" width="18" height="18" viewBox="0 0 18 18"><path d="M2 5 L9 2 L16 5 L9 8 Z" fill="#e83ae8" stroke="#a018a0" stroke-width="0.5"/><path d="M2 5 L9 8 V16 L2 13 Z" fill="#8fb0a0" stroke="#2858c8" stroke-width="0.9"/><path d="M16 5 L9 8 V16 L16 13 Z" fill="#7c9cb0" stroke="#2858c8" stroke-width="0.9"/><path d="M9 8 V16" stroke="#2060e0" stroke-width="1.6"/></svg>
<svg class="abs" style="left:1367px;top:19.5px" width="18" height="18" viewBox="0 0 18 18"><rect x="3" y="6" width="11" height="10" fill="#e8efe8" stroke="#5a7a6a" stroke-width="1"/></svg>
<svg class="abs" style="left:1431px;top:19.5px" width="18" height="18" viewBox="0 0 18 18"><rect x="2" y="3" width="14" height="13" fill="#e6e8f4" stroke="#4a5488" stroke-width="1"/><path d="M9 3 V16 M2 9 H16" stroke="#4a5488" stroke-width="1"/></svg>
<div class="st" style="left:1463px;top:22px;">LS: 1.00 PS: 1.00</div>
<div class="sep" style="left:1580px;top:21px"></div>
<div class="st" style="left:1589px;top:22px;">单位: 毫米</div>
<div class="sep" style="left:1654px;top:21px"></div>
<div class="st" style="left:1663px;top:22px;color:#e8141c;letter-spacing:0.36px">X =-0436.331</div>
<div class="st" style="left:1745px;top:22px;letter-spacing:0.4px">Y = 0433.631 Z = 0000.000</div>
</div>
<div id="taskbar"><div class="abs" style="left:48px;top:0;width:344px;height:8px;background:#f2f2f2"></div><div class="abs" style="left:638px;top:0;width:45px;height:8px;background:#4d4d4d"></div><div class="abs" style="left:683px;top:0;width:2px;height:8px;background:#3a3a3a"></div><div class="abs" style="left:1816px;top:5px;font-size:11.5px;line-height:11px;color:#fff;white-space:nowrap">10:28</div><div class="abs" style="left:1915px;top:0;width:1px;height:8px;background:#6a6a6a"></div></div>
<svg class="abs" style="left:1340px;top:955px" width="140" height="93" viewBox="1340 955 140 93">
<circle cx="1367.5" cy="1005.78" r="8.2" fill="#8d6354"/><text x="1367.5" y="1010.0799999999999" font-family="Liberation Sans, sans-serif" font-size="12" fill="#fff" text-anchor="middle">A</text>
<circle cx="1374.53" cy="1026.56" r="8.4" fill="#8d6354"/><path d="M1369.03,1024.06 L1372.03,1022.06 Q1374.53,1023.56 1377.03,1022.06 L1380.03,1024.06 L1378.53,1026.26 L1377.53,1025.56 V1031.36 H1371.53 V1025.56 L1370.53,1026.26 Z" fill="#fff"/>
<ellipse cx="1405.0" cy="1037.81" rx="15" ry="2.6" fill="#a9673a"/>
<path d="M1394.12,1017.0 Q1386.12,1023.0 1389.12,1028.0 Q1396.12,1027.0 1399.12,1024.0 L1401.12,1035.0 Q1405.12,1038.0 1408.12,1034.0 Q1412.12,1038.0 1416.12,1035.0 L1417.12,1024.0 Q1422.12,1028.0 1426.12,1022.0 Q1424.12,1017.0 1417.12,1016.0 Z" fill="#fff14d" stroke="#e8c81e" stroke-width="0.8"/>
<path d="M1417.5,1018.75 L1400.31,1031.25" stroke="#8f5524" stroke-width="1.6"/>
<circle cx="1390.62" cy="1023.9100000000001" r="2.6" fill="#b5763c"/><circle cx="1400.62" cy="1023.9100000000001" r="2.6" fill="#b5763c"/><ellipse cx="1395.62" cy="1028.91" rx="8" ry="6.8" fill="#b5763c"/><circle cx="1391.82" cy="1030.41" r="1.5" fill="#f08ab0"/><circle cx="1399.4199999999998" cy="1030.41" r="1.5" fill="#f08ab0"/><circle cx="1393.02" cy="1027.71" r="0.7" fill="#5a3214"/><circle cx="1398.2199999999998" cy="1027.71" r="0.7" fill="#5a3214"/>
<circle cx="1389.06" cy="978.44" r="7.2" fill="#b5763c" stroke="#8f5524" stroke-width="0.6"/><circle cx="1389.06" cy="979.0400000000001" r="3.6" fill="#e9a57a"/>
<circle cx="1423.75" cy="978.44" r="7.2" fill="#b5763c" stroke="#8f5524" stroke-width="0.6"/><circle cx="1423.75" cy="979.0400000000001" r="3.6" fill="#e9a57a"/>
<path d="M1405.0,973.44 Q1404.0,967.44 1400.0,965.44" fill="none" stroke="#8f5524" stroke-width="1.8" stroke-linecap="round"/><path d="M1407.0,973.44 Q1408.0,968.44 1410.0,966.44" fill="none" stroke="#8f5524" stroke-width="1.8" stroke-linecap="round"/><circle cx="1399.5" cy="964.94" r="1.8" fill="#8f5524"/><circle cx="1410.5" cy="965.94" r="1.5" fill="#8f5524"/>
<ellipse cx="1406.56" cy="996.88" rx="27" ry="23.5" fill="#b5763c" stroke="#8f5524" stroke-width="0.7"/>
<ellipse cx="1406.56" cy="1002.34" rx="20.5" ry="16.3" fill="#fff14d" stroke="#e8c81e" stroke-width="0.6"/>
<path d="M1392.56,1014.34 Q1406.56,1023.34 1420.56,1014.34 Q1406.56,1019.34 1392.56,1014.34 Z" fill="#8f5524"/>
<ellipse cx="1395.62" cy="994.22" rx="1.5" ry="1.9" fill="#7a4516"/>
<ellipse cx="1416.88" cy="994.22" rx="1.5" ry="1.9" fill="#7a4516"/>
<ellipse cx="1406.41" cy="997.19" rx="1.3" ry="0.9" fill="#9a5a1e"/>
<ellipse cx="1390.94" cy="999.69" rx="3.6" ry="2.6" fill="#f8a23c" opacity="0.85"/>
<ellipse cx="1421.41" cy="999.69" rx="3.6" ry="2.6" fill="#f8a23c" opacity="0.85"/>
<text x="1445.94" y="987.47" transform="rotate(12 1445.94 980.47)" font-family="Liberation Sans, sans-serif" font-weight="bold" font-size="21" text-anchor="middle" fill="#fff8ee" stroke="#fff8ee" stroke-width="2.6" stroke-linejoin="round">W</text>
<circle cx="1439.94" cy="978.47" r="1.3" fill="#c98a4e"/>
<circle cx="1448.94" cy="983.47" r="1.3" fill="#c98a4e"/>
<circle cx="1443.94" cy="986.47" r="1.3" fill="#c98a4e"/>
<circle cx="1452.94" cy="976.47" r="1.3" fill="#c98a4e"/>
<circle cx="1445.94" cy="979.47" r="1.3" fill="#c98a4e"/>
<circle cx="1439.41" cy="992.78" r="3.6" fill="#b5763c"/><circle cx="1454.41" cy="993.78" r="3.6" fill="#b5763c"/><circle cx="1454.41" cy="993.78" r="1.7" fill="#e9a57a"/><circle cx="1439.41" cy="992.78" r="1.7" fill="#e9a57a"/>
<text x="1446.41" y="1009.28" font-family="Liberation Sans, sans-serif" font-weight="bold" font-size="25" text-anchor="middle" fill="#b5763c" stroke="#b5763c" stroke-width="2.4">O</text>
<ellipse cx="1446.41" cy="1001.28" rx="3" ry="4.5" fill="#dfe3f0"/>
<text x="1447.5" y="1030.6599999999999" transform="rotate(-14 1447.5 1022.66)" font-family="Liberation Sans, sans-serif" font-weight="bold" font-size="23" text-anchor="middle" fill="#fff14d" stroke="#fff14d" stroke-width="2.8" stroke-linejoin="round">W</text>
</svg>
</body>
</html>
